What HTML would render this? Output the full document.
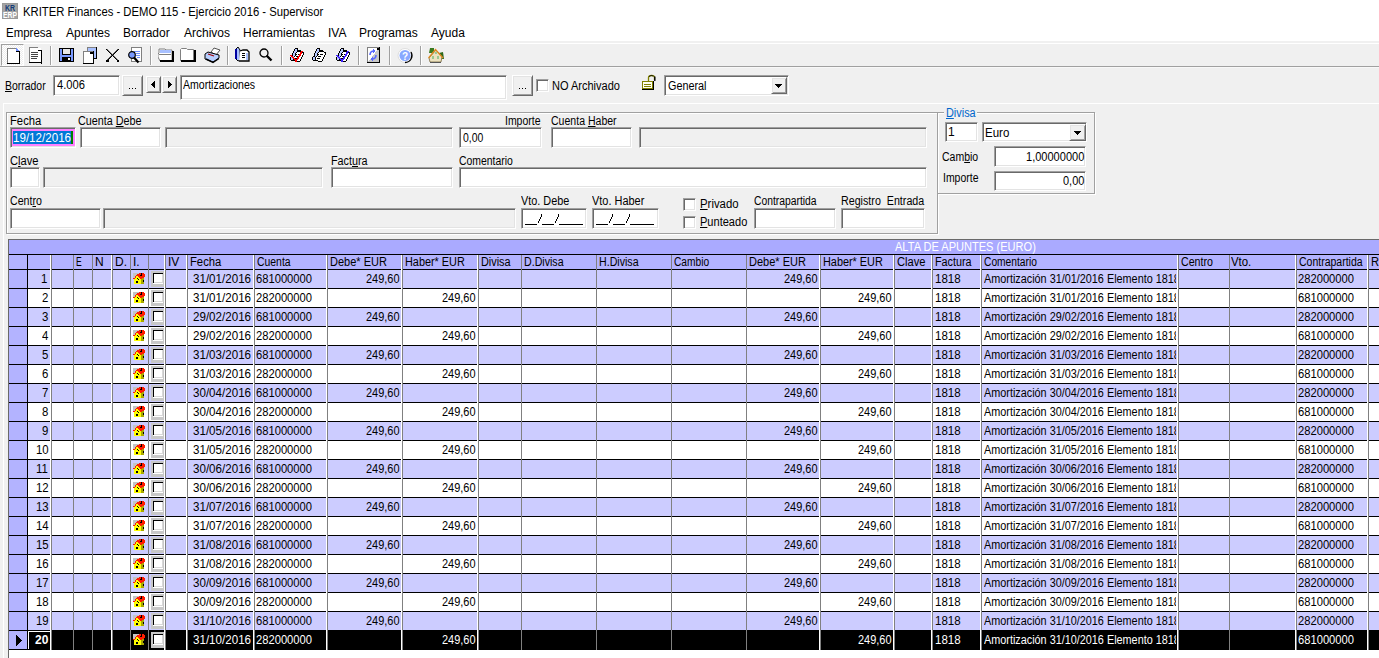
<!DOCTYPE html><html><head><meta charset="utf-8"><style>
html,body{margin:0;padding:0;}
body{width:1379px;height:658px;overflow:hidden;position:relative;background:#f0f0f0;font-family:"Liberation Sans",sans-serif;}
.a{position:absolute;box-sizing:border-box;}
.t{position:absolute;white-space:pre;line-height:1;transform-origin:0 0;}
.sunk{border-top:1px solid #a0a0a0;border-left:1px solid #a0a0a0;border-right:1px solid #fff;border-bottom:1px solid #fff;box-shadow:inset 1px 1px 0 #696969, inset -1px -1px 0 #e3e3e3;}
.rais{border-top:1px solid #fff;border-left:1px solid #fff;border-right:1px solid #696969;border-bottom:1px solid #696969;box-shadow:inset 1px 1px 0 #e3e3e3, inset -1px -1px 0 #a0a0a0;}
.u{text-decoration:underline;}
</style></head><body>
<div class="a" style="left:0px;top:0px;width:1379px;height:41px;background:#fff;"></div><svg class="a" style="left:2px;top:3px" width="16" height="16" viewBox="0 0 16 16" shape-rendering="crispEdges"><rect x="0" y="0" width="16" height="16" fill="#a4a4a4"/><rect x="0.5" y="0.5" width="15" height="15" fill="none" stroke="#9a9a9a"/><text x="3" y="8" font-family="Liberation Sans" font-weight="bold" font-size="9.5" fill="#123a78" textLength="10" lengthAdjust="spacingAndGlyphs">KR</text><text x="1" y="15" font-family="Liberation Sans" font-weight="bold" font-size="8.5" fill="#fff" textLength="14" lengthAdjust="spacingAndGlyphs">ERP</text></svg><div class="t" style="left:23.06px;top:6px;font-size:12px;color:#000;transform:scaleX(0.9403);">KRITER Finances - DEMO 115 - Ejercicio 2016 - Supervisor</div><div class="t" style="left:6.04px;top:27px;font-size:12px;color:#000;transform:scaleX(0.9574);">Empresa</div><div class="t" style="left:66.00px;top:27px;font-size:12px;color:#000;">Apuntes</div><div class="t" style="left:123.00px;top:27px;font-size:12px;color:#000;">Borrador</div><div class="t" style="left:184.00px;top:27px;font-size:12px;color:#000;">Archivos</div><div class="t" style="left:243.00px;top:27px;font-size:12px;color:#000;">Herramientas</div><div class="t" style="left:328.00px;top:27px;font-size:12px;color:#000;">IVA</div><div class="t" style="left:359.00px;top:27px;font-size:12px;color:#000;">Programas</div><div class="t" style="left:431.00px;top:27px;font-size:12px;color:#000;">Ayuda</div><div class="a" style="left:0px;top:41px;width:1379px;height:25px;background:#f0f0f0;"></div><div class="a" style="left:0px;top:43px;width:1379px;height:1px;background:#fff;"></div><div class="a" style="left:0px;top:66px;width:1379px;height:1px;background:#a0a0a0;"></div><div class="a" style="left:0px;top:67px;width:1379px;height:1px;background:#f8f8f8;"></div><div class="a" style="left:1px;top:44px;width:23px;height:22px;border-top:1px solid #a0a0a0;border-left:1px solid #a0a0a0;border-right:1px solid #fff;border-bottom:1px solid #fff;background:repeating-conic-gradient(#fff 0 25%, #ececec 0 50%) 0 0/2px 2px;"></div><div class="a" style="left:50px;top:46px;width:1px;height:19px;background:#a0a0a0;"></div><div class="a" style="left:51px;top:46px;width:1px;height:19px;background:#fff;"></div><div class="a" style="left:150px;top:46px;width:1px;height:19px;background:#a0a0a0;"></div><div class="a" style="left:151px;top:46px;width:1px;height:19px;background:#fff;"></div><div class="a" style="left:227px;top:46px;width:1px;height:19px;background:#a0a0a0;"></div><div class="a" style="left:228px;top:46px;width:1px;height:19px;background:#fff;"></div><div class="a" style="left:281px;top:46px;width:1px;height:19px;background:#a0a0a0;"></div><div class="a" style="left:282px;top:46px;width:1px;height:19px;background:#fff;"></div><div class="a" style="left:358px;top:46px;width:1px;height:19px;background:#a0a0a0;"></div><div class="a" style="left:359px;top:46px;width:1px;height:19px;background:#fff;"></div><div class="a" style="left:389px;top:46px;width:1px;height:19px;background:#a0a0a0;"></div><div class="a" style="left:390px;top:46px;width:1px;height:19px;background:#fff;"></div><div class="a" style="left:420px;top:46px;width:1px;height:19px;background:#a0a0a0;"></div><div class="a" style="left:421px;top:46px;width:1px;height:19px;background:#fff;"></div><svg class="a" style="left:7px;top:48px" width="14" height="17" viewBox="0 0 14 17" shape-rendering="crispEdges"><rect x="0" y="0" width="1" height="16" fill="#808080"/><rect x="0" y="0" width="9" height="1" fill="#808080"/><rect x="1" y="1" width="11" height="14" fill="#fff"/><path d="M9 0 L13 4 H9 Z" fill="#6f8fff"/><rect x="12" y="3" width="1" height="13" fill="#000"/><rect x="0" y="15" width="13" height="1" fill="#000"/><rect x="9" y="3" width="4" height="1" fill="#000"/></svg><svg class="a" style="left:29px;top:47px" width="14" height="17" viewBox="0 0 14 17" shape-rendering="crispEdges"><rect x="0" y="0" width="1" height="16" fill="#808080"/><rect x="0" y="0" width="9" height="1" fill="#808080"/><rect x="1" y="1" width="11" height="15" fill="#fff"/><rect x="12" y="3" width="1" height="14" fill="#000"/><rect x="0" y="15" width="13" height="1" fill="#000"/><rect x="9" y="3" width="4" height="1" fill="#000"/><rect x="2" y="5" width="7" height="1" fill="#444"/><rect x="2" y="7" width="7" height="1" fill="#444"/><rect x="2" y="9" width="7" height="1" fill="#444"/><rect x="2" y="11" width="6" height="1" fill="#444"/></svg><svg class="a" style="left:59px;top:48px" width="15" height="15" viewBox="0 0 15 15" shape-rendering="crispEdges"><rect x="0" y="0" width="15" height="14" fill="#000"/><rect x="1" y="1" width="13" height="12" fill="#7a9aff"/><rect x="3" y="1" width="9" height="6" fill="#000"/><rect x="4" y="1" width="7" height="5" fill="#e8e8e8"/><rect x="3" y="9" width="9" height="4" fill="#000"/><rect x="9" y="10" width="2" height="2" fill="#fff"/></svg><svg class="a" style="left:83px;top:47px" width="15" height="17" viewBox="0 0 15 17" shape-rendering="crispEdges"><rect x="4" y="0" width="10" height="12" fill="#000"/><rect x="4" y="0" width="9" height="11" fill="#808080"/><rect x="5" y="1" width="8" height="10" fill="#a8c0ff"/><rect x="0" y="4" width="11" height="13" fill="#000"/><rect x="0" y="4" width="10" height="12" fill="#808080"/><rect x="1" y="5" width="9" height="11" fill="#fff"/><rect x="7" y="5" width="3" height="2" fill="#000"/></svg><svg class="a" style="left:106px;top:49px" width="13" height="13" viewBox="0 0 13 13" shape-rendering="crispEdges"><rect x="0" y="0" width="1" height="1" fill="#000"/><rect x="1" y="0" width="1" height="1" fill="#777"/><rect x="12" y="0" width="1" height="1" fill="#000"/><rect x="11" y="0" width="1" height="1" fill="#555"/><rect x="1" y="1" width="1" height="1" fill="#000"/><rect x="2" y="1" width="1" height="1" fill="#777"/><rect x="11" y="1" width="1" height="1" fill="#000"/><rect x="10" y="1" width="1" height="1" fill="#555"/><rect x="2" y="2" width="1" height="1" fill="#000"/><rect x="3" y="2" width="1" height="1" fill="#777"/><rect x="10" y="2" width="1" height="1" fill="#000"/><rect x="9" y="2" width="1" height="1" fill="#555"/><rect x="3" y="3" width="1" height="1" fill="#000"/><rect x="4" y="3" width="1" height="1" fill="#777"/><rect x="9" y="3" width="1" height="1" fill="#000"/><rect x="8" y="3" width="1" height="1" fill="#555"/><rect x="4" y="4" width="1" height="1" fill="#000"/><rect x="5" y="4" width="1" height="1" fill="#777"/><rect x="8" y="4" width="1" height="1" fill="#000"/><rect x="7" y="4" width="1" height="1" fill="#555"/><rect x="5" y="5" width="1" height="1" fill="#000"/><rect x="6" y="5" width="1" height="1" fill="#777"/><rect x="7" y="5" width="1" height="1" fill="#000"/><rect x="6" y="5" width="1" height="1" fill="#555"/><rect x="6" y="6" width="1" height="1" fill="#000"/><rect x="7" y="6" width="1" height="1" fill="#777"/><rect x="6" y="6" width="1" height="1" fill="#000"/><rect x="5" y="6" width="1" height="1" fill="#555"/><rect x="7" y="7" width="1" height="1" fill="#000"/><rect x="8" y="7" width="1" height="1" fill="#777"/><rect x="5" y="7" width="1" height="1" fill="#000"/><rect x="4" y="7" width="1" height="1" fill="#555"/><rect x="8" y="8" width="1" height="1" fill="#000"/><rect x="9" y="8" width="1" height="1" fill="#777"/><rect x="4" y="8" width="1" height="1" fill="#000"/><rect x="3" y="8" width="1" height="1" fill="#555"/><rect x="9" y="9" width="1" height="1" fill="#000"/><rect x="10" y="9" width="1" height="1" fill="#777"/><rect x="3" y="9" width="1" height="1" fill="#000"/><rect x="2" y="9" width="1" height="1" fill="#555"/><rect x="10" y="10" width="1" height="1" fill="#000"/><rect x="11" y="10" width="1" height="1" fill="#777"/><rect x="2" y="10" width="1" height="1" fill="#000"/><rect x="1" y="10" width="1" height="1" fill="#555"/><rect x="11" y="11" width="1" height="1" fill="#000"/><rect x="12" y="11" width="1" height="1" fill="#777"/><rect x="1" y="11" width="1" height="1" fill="#000"/><rect x="0" y="11" width="1" height="1" fill="#555"/><rect x="12" y="12" width="1" height="1" fill="#000"/><rect x="12" y="12" width="1" height="1" fill="#777"/><rect x="0" y="12" width="1" height="1" fill="#000"/><rect x="0" y="12" width="1" height="1" fill="#555"/><rect x="0" y="11" width="3" height="2" fill="#000"/><rect x="11" y="11" width="2" height="2" fill="#000"/></svg><svg class="a" style="left:128px;top:47px" width="15" height="17" viewBox="0 0 15 17" shape-rendering="crispEdges"><rect x="3" y="0" width="11" height="15" fill="#808080"/><rect x="4" y="1" width="9" height="13" fill="#fff"/><rect x="6" y="4" width="6" height="1" fill="#6f8fff"/><rect x="8" y="6" width="4" height="1" fill="#6f8fff"/><rect x="8" y="8" width="4" height="1" fill="#6f8fff"/><rect x="9" y="10" width="3" height="1" fill="#6f8fff"/><circle cx="4" cy="8" r="3.3" fill="#7a9aff" stroke="#000" stroke-width="1.2" shape-rendering="auto"/><path d="M6 10.5 L10.5 15.5" stroke="#000" stroke-width="2.2" shape-rendering="auto"/></svg><svg class="a" style="left:158px;top:48px" width="16" height="14" viewBox="0 0 16 14" shape-rendering="crispEdges"><path d="M1 1 H7 L8 2 H14 V13 H2 L0 9 V6 L1 5 Z" fill="#fff" stroke="#808080" stroke-width="1" shape-rendering="auto"/><rect x="2" y="2" width="11" height="3" fill="#a8c0ff"/><rect x="0.5" y="5.5" width="12" height="1" fill="#808080"/><rect x="14" y="3" width="2" height="11" fill="#000"/><rect x="2" y="12" width="14" height="2" fill="#000"/></svg><svg class="a" style="left:180px;top:48px" width="16" height="14" viewBox="0 0 16 14" shape-rendering="crispEdges"><path d="M0.5 1.5 L1.5 0.5 H6.5 L7.5 1.5 H13.5 V12.5 H0.5 Z" fill="#fff" stroke="#808080" shape-rendering="auto"/><rect x="14" y="2" width="2" height="12" fill="#000"/><rect x="1" y="12" width="15" height="2" fill="#000"/></svg><svg class="a" style="left:204px;top:47px" width="17" height="17" viewBox="0 0 17 17" shape-rendering="crispEdges"><path d="M7 5 L10 1 L16 3 L12 8 Z" fill="#fff" stroke="#555" shape-rendering="auto"/><path d="M1 7 L4 5 L15 8 L15 11 L9 15 L1 12 Z" fill="#b8cfff" stroke="#000" shape-rendering="auto"/><path d="M4 7 L10 9" stroke="#a00000" stroke-width="1.2" shape-rendering="auto"/><path d="M2 12 L9 15.5 L15 11.5" stroke="#000" stroke-width="1.4" fill="none" shape-rendering="auto"/></svg><svg class="a" style="left:235px;top:47px" width="15" height="15" viewBox="0 0 15 15" shape-rendering="crispEdges"><path d="M1 2 L3 0 L5 3 V13 L3 14 L1 12 Z" fill="#a8c0ff" stroke="#000" shape-rendering="auto"/><rect x="0" y="2" width="1.5" height="10" fill="#0000a0"/><path d="M5 4 L8 3 H12 L14 5 V14 H4" fill="#fff" stroke="#000" stroke-width="1.3" shape-rendering="auto"/><rect x="11" y="6" width="2" height="7" fill="#a8c0ff"/><rect x="7" y="6" width="3" height="1" fill="#000"/><rect x="7" y="8" width="3" height="1" fill="#000"/><rect x="7" y="10" width="3" height="1" fill="#000"/></svg><svg class="a" style="left:259px;top:48px" width="14" height="14" viewBox="0 0 14 14" shape-rendering="crispEdges"><circle cx="5" cy="5" r="4" fill="#f0f0f0" stroke="#000" stroke-width="1.3" shape-rendering="auto"/><path d="M7.5 7.5 L12.5 12.5" stroke="#000" stroke-width="2.4" shape-rendering="auto"/></svg><svg class="a" style="left:290px;top:48px" width="16" height="14" viewBox="0 0 16 14" shape-rendering="crispEdges"><rect x="5" y="0" width="3" height="1" fill="#000"/><rect x="4" y="1" width="1" height="1" fill="#000"/><rect x="5" y="1" width="2" height="1" fill="#b8c8ff"/><rect x="7" y="1" width="1" height="1" fill="#000"/><rect x="4" y="2" width="1" height="1" fill="#000"/><rect x="5" y="2" width="2" height="1" fill="#b8c8ff"/><rect x="7" y="2" width="4" height="1" fill="#000"/><rect x="3" y="3" width="1" height="1" fill="#000"/><rect x="4" y="3" width="3" height="1" fill="#b8c8ff"/><rect x="7" y="3" width="4" height="1" fill="#000"/><rect x="11" y="3" width="2" height="1" fill="#ff0000"/><rect x="3" y="4" width="1" height="1" fill="#000"/><rect x="4" y="4" width="2" height="1" fill="#b8c8ff"/><rect x="6" y="4" width="1" height="1" fill="#000"/><rect x="7" y="4" width="3" height="1" fill="#fff"/><rect x="10" y="4" width="2" height="1" fill="#ff0000"/><rect x="12" y="4" width="2" height="1" fill="#000"/><rect x="2" y="5" width="1" height="1" fill="#000"/><rect x="3" y="5" width="2" height="1" fill="#b8c8ff"/><rect x="5" y="5" width="1" height="1" fill="#000"/><rect x="6" y="5" width="4" height="1" fill="#fff"/><rect x="10" y="5" width="2" height="1" fill="#ff0000"/><rect x="12" y="5" width="1" height="1" fill="#fff"/><rect x="13" y="5" width="1" height="1" fill="#000"/><rect x="2" y="6" width="1" height="1" fill="#000"/><rect x="3" y="6" width="2" height="1" fill="#b8c8ff"/><rect x="5" y="6" width="2" height="1" fill="#000"/><rect x="7" y="6" width="1" height="1" fill="#fff"/><rect x="8" y="6" width="1" height="1" fill="#000"/><rect x="9" y="6" width="2" height="1" fill="#ff0000"/><rect x="11" y="6" width="2" height="1" fill="#fff"/><rect x="13" y="6" width="1" height="1" fill="#000"/><rect x="0" y="7" width="2" height="1" fill="#ff0000"/><rect x="2" y="7" width="1" height="1" fill="#000"/><rect x="3" y="7" width="2" height="1" fill="#b8c8ff"/><rect x="5" y="7" width="1" height="1" fill="#000"/><rect x="6" y="7" width="3" height="1" fill="#fff"/><rect x="9" y="7" width="2" height="1" fill="#ff0000"/><rect x="11" y="7" width="1" height="1" fill="#fff"/><rect x="12" y="7" width="1" height="1" fill="#000"/><rect x="1" y="8" width="2" height="1" fill="#ff0000"/><rect x="3" y="8" width="1" height="1" fill="#b8c8ff"/><rect x="4" y="8" width="1" height="1" fill="#000"/><rect x="5" y="8" width="1" height="1" fill="#fff"/><rect x="6" y="8" width="2" height="1" fill="#000"/><rect x="8" y="8" width="2" height="1" fill="#ff0000"/><rect x="10" y="8" width="2" height="1" fill="#fff"/><rect x="12" y="8" width="1" height="1" fill="#000"/><rect x="0" y="9" width="1" height="1" fill="#000"/><rect x="1" y="9" width="1" height="1" fill="#b8c8ff"/><rect x="2" y="9" width="2" height="1" fill="#ff0000"/><rect x="4" y="9" width="3" height="1" fill="#fff"/><rect x="7" y="9" width="2" height="1" fill="#ff0000"/><rect x="9" y="9" width="2" height="1" fill="#fff"/><rect x="11" y="9" width="1" height="1" fill="#000"/><rect x="0" y="10" width="1" height="1" fill="#000"/><rect x="1" y="10" width="2" height="1" fill="#b8c8ff"/><rect x="3" y="10" width="2" height="1" fill="#ff0000"/><rect x="5" y="10" width="2" height="1" fill="#000"/><rect x="7" y="10" width="2" height="1" fill="#ff0000"/><rect x="9" y="10" width="2" height="1" fill="#fff"/><rect x="11" y="10" width="1" height="1" fill="#000"/><rect x="0" y="11" width="1" height="1" fill="#000"/><rect x="1" y="11" width="2" height="1" fill="#b8c8ff"/><rect x="3" y="11" width="1" height="1" fill="#000"/><rect x="4" y="11" width="4" height="1" fill="#ff0000"/><rect x="8" y="11" width="2" height="1" fill="#fff"/><rect x="10" y="11" width="1" height="1" fill="#000"/><rect x="1" y="12" width="4" height="1" fill="#000"/><rect x="5" y="12" width="2" height="1" fill="#ff0000"/><rect x="7" y="12" width="3" height="1" fill="#fff"/><rect x="10" y="12" width="1" height="1" fill="#000"/><rect x="5" y="13" width="2" height="1" fill="#ff0000"/><rect x="7" y="13" width="3" height="1" fill="#000"/></svg><svg class="a" style="left:312px;top:48px" width="16" height="14" viewBox="0 0 16 14" shape-rendering="crispEdges"><rect x="5" y="0" width="3" height="1" fill="#000"/><rect x="4" y="1" width="1" height="1" fill="#000"/><rect x="5" y="1" width="2" height="1" fill="#b8c8ff"/><rect x="7" y="1" width="1" height="1" fill="#000"/><rect x="4" y="2" width="1" height="1" fill="#000"/><rect x="5" y="2" width="2" height="1" fill="#b8c8ff"/><rect x="7" y="2" width="4" height="1" fill="#000"/><rect x="3" y="3" width="1" height="1" fill="#000"/><rect x="4" y="3" width="3" height="1" fill="#b8c8ff"/><rect x="7" y="3" width="5" height="1" fill="#000"/><rect x="3" y="4" width="1" height="1" fill="#000"/><rect x="4" y="4" width="2" height="1" fill="#b8c8ff"/><rect x="6" y="4" width="1" height="1" fill="#000"/><rect x="7" y="4" width="5" height="1" fill="#fff"/><rect x="12" y="4" width="2" height="1" fill="#000"/><rect x="2" y="5" width="1" height="1" fill="#000"/><rect x="3" y="5" width="2" height="1" fill="#b8c8ff"/><rect x="5" y="5" width="1" height="1" fill="#000"/><rect x="6" y="5" width="7" height="1" fill="#fff"/><rect x="13" y="5" width="1" height="1" fill="#000"/><rect x="2" y="6" width="1" height="1" fill="#000"/><rect x="3" y="6" width="2" height="1" fill="#b8c8ff"/><rect x="5" y="6" width="2" height="1" fill="#000"/><rect x="7" y="6" width="1" height="1" fill="#fff"/><rect x="8" y="6" width="3" height="1" fill="#000"/><rect x="11" y="6" width="2" height="1" fill="#fff"/><rect x="13" y="6" width="1" height="1" fill="#000"/><rect x="2" y="7" width="1" height="1" fill="#000"/><rect x="3" y="7" width="2" height="1" fill="#b8c8ff"/><rect x="5" y="7" width="1" height="1" fill="#000"/><rect x="6" y="7" width="6" height="1" fill="#fff"/><rect x="12" y="7" width="1" height="1" fill="#000"/><rect x="1" y="8" width="2" height="1" fill="#000"/><rect x="3" y="8" width="1" height="1" fill="#b8c8ff"/><rect x="4" y="8" width="1" height="1" fill="#000"/><rect x="5" y="8" width="1" height="1" fill="#fff"/><rect x="6" y="8" width="3" height="1" fill="#000"/><rect x="9" y="8" width="3" height="1" fill="#fff"/><rect x="12" y="8" width="1" height="1" fill="#000"/><rect x="0" y="9" width="1" height="1" fill="#000"/><rect x="1" y="9" width="2" height="1" fill="#b8c8ff"/><rect x="3" y="9" width="1" height="1" fill="#000"/><rect x="4" y="9" width="7" height="1" fill="#fff"/><rect x="11" y="9" width="1" height="1" fill="#000"/><rect x="0" y="10" width="1" height="1" fill="#000"/><rect x="1" y="10" width="2" height="1" fill="#b8c8ff"/><rect x="3" y="10" width="1" height="1" fill="#000"/><rect x="4" y="10" width="1" height="1" fill="#fff"/><rect x="5" y="10" width="3" height="1" fill="#000"/><rect x="8" y="10" width="3" height="1" fill="#fff"/><rect x="11" y="10" width="1" height="1" fill="#000"/><rect x="0" y="11" width="1" height="1" fill="#000"/><rect x="1" y="11" width="2" height="1" fill="#b8c8ff"/><rect x="3" y="11" width="1" height="1" fill="#000"/><rect x="4" y="11" width="6" height="1" fill="#fff"/><rect x="10" y="11" width="1" height="1" fill="#000"/><rect x="1" y="12" width="5" height="1" fill="#000"/><rect x="6" y="12" width="4" height="1" fill="#fff"/><rect x="10" y="12" width="1" height="1" fill="#000"/><rect x="6" y="13" width="4" height="1" fill="#000"/></svg><svg class="a" style="left:336px;top:48px" width="16" height="14" viewBox="0 0 16 14" shape-rendering="crispEdges"><rect x="5" y="0" width="3" height="1" fill="#000"/><rect x="4" y="1" width="1" height="1" fill="#000"/><rect x="5" y="1" width="2" height="1" fill="#b8c8ff"/><rect x="7" y="1" width="1" height="1" fill="#000"/><rect x="4" y="2" width="1" height="1" fill="#000"/><rect x="5" y="2" width="2" height="1" fill="#b8c8ff"/><rect x="7" y="2" width="4" height="1" fill="#000"/><rect x="3" y="3" width="1" height="1" fill="#000"/><rect x="4" y="3" width="3" height="1" fill="#b8c8ff"/><rect x="7" y="3" width="4" height="1" fill="#000"/><rect x="11" y="3" width="2" height="1" fill="#4020ff"/><rect x="3" y="4" width="1" height="1" fill="#000"/><rect x="4" y="4" width="2" height="1" fill="#b8c8ff"/><rect x="6" y="4" width="1" height="1" fill="#000"/><rect x="7" y="4" width="3" height="1" fill="#fff"/><rect x="10" y="4" width="2" height="1" fill="#4020ff"/><rect x="12" y="4" width="2" height="1" fill="#000"/><rect x="2" y="5" width="1" height="1" fill="#000"/><rect x="3" y="5" width="2" height="1" fill="#b8c8ff"/><rect x="5" y="5" width="1" height="1" fill="#000"/><rect x="6" y="5" width="4" height="1" fill="#fff"/><rect x="10" y="5" width="2" height="1" fill="#4020ff"/><rect x="12" y="5" width="1" height="1" fill="#fff"/><rect x="13" y="5" width="1" height="1" fill="#000"/><rect x="2" y="6" width="1" height="1" fill="#000"/><rect x="3" y="6" width="2" height="1" fill="#b8c8ff"/><rect x="5" y="6" width="2" height="1" fill="#000"/><rect x="7" y="6" width="1" height="1" fill="#fff"/><rect x="8" y="6" width="1" height="1" fill="#000"/><rect x="9" y="6" width="2" height="1" fill="#4020ff"/><rect x="11" y="6" width="2" height="1" fill="#fff"/><rect x="13" y="6" width="1" height="1" fill="#000"/><rect x="0" y="7" width="2" height="1" fill="#4020ff"/><rect x="2" y="7" width="1" height="1" fill="#000"/><rect x="3" y="7" width="2" height="1" fill="#b8c8ff"/><rect x="5" y="7" width="1" height="1" fill="#000"/><rect x="6" y="7" width="3" height="1" fill="#fff"/><rect x="9" y="7" width="2" height="1" fill="#4020ff"/><rect x="11" y="7" width="1" height="1" fill="#fff"/><rect x="12" y="7" width="1" height="1" fill="#000"/><rect x="1" y="8" width="2" height="1" fill="#4020ff"/><rect x="3" y="8" width="1" height="1" fill="#b8c8ff"/><rect x="4" y="8" width="1" height="1" fill="#000"/><rect x="5" y="8" width="1" height="1" fill="#fff"/><rect x="6" y="8" width="2" height="1" fill="#000"/><rect x="8" y="8" width="2" height="1" fill="#4020ff"/><rect x="10" y="8" width="2" height="1" fill="#fff"/><rect x="12" y="8" width="1" height="1" fill="#000"/><rect x="0" y="9" width="1" height="1" fill="#000"/><rect x="1" y="9" width="1" height="1" fill="#b8c8ff"/><rect x="2" y="9" width="2" height="1" fill="#4020ff"/><rect x="4" y="9" width="3" height="1" fill="#fff"/><rect x="7" y="9" width="2" height="1" fill="#4020ff"/><rect x="9" y="9" width="2" height="1" fill="#fff"/><rect x="11" y="9" width="1" height="1" fill="#000"/><rect x="0" y="10" width="1" height="1" fill="#000"/><rect x="1" y="10" width="2" height="1" fill="#b8c8ff"/><rect x="3" y="10" width="2" height="1" fill="#4020ff"/><rect x="5" y="10" width="2" height="1" fill="#000"/><rect x="7" y="10" width="2" height="1" fill="#4020ff"/><rect x="9" y="10" width="2" height="1" fill="#fff"/><rect x="11" y="10" width="1" height="1" fill="#000"/><rect x="0" y="11" width="1" height="1" fill="#000"/><rect x="1" y="11" width="2" height="1" fill="#b8c8ff"/><rect x="3" y="11" width="1" height="1" fill="#000"/><rect x="4" y="11" width="4" height="1" fill="#4020ff"/><rect x="8" y="11" width="2" height="1" fill="#fff"/><rect x="10" y="11" width="1" height="1" fill="#000"/><rect x="1" y="12" width="4" height="1" fill="#000"/><rect x="5" y="12" width="2" height="1" fill="#4020ff"/><rect x="7" y="12" width="3" height="1" fill="#fff"/><rect x="10" y="12" width="1" height="1" fill="#000"/><rect x="5" y="13" width="2" height="1" fill="#4020ff"/><rect x="7" y="13" width="3" height="1" fill="#000"/></svg><svg class="a" style="left:367px;top:47px" width="14" height="16" viewBox="0 0 14 16" shape-rendering="crispEdges"><rect x="0" y="0" width="13" height="16" fill="#000"/><rect x="0" y="0" width="12" height="15" fill="#808080"/><path d="M1 1 H10 L12 3 V15 H1 Z" fill="#fff"/><path d="M12 1 L1 15 H12 Z" fill="#c8c8c8"/><rect x="10" y="1" width="2" height="2" fill="#000"/><path d="M3 8 Q3 4 7 4 M9 8 Q9 12 5 12" stroke="#5a6aff" stroke-width="1.6" fill="none" shape-rendering="auto"/><path d="M6 2 L9 4 L6 6 Z M6 10 L3 12 L6 14 Z" fill="#5a6aff"/></svg><svg class="a" style="left:397px;top:48px" width="17" height="16" viewBox="0 0 17 16" shape-rendering="crispEdges"><circle cx="8" cy="7.5" r="7" fill="#fff" stroke="#ddd" shape-rendering="auto"/><path d="M14 4 A7 7 0 0 1 8 14.5" stroke="#000" stroke-width="1.3" fill="none" shape-rendering="auto"/><circle cx="8" cy="7.5" r="5.5" fill="#88a8ff" shape-rendering="auto"/><text x="8" y="11.5" font-family="Liberation Sans" font-weight="bold" font-size="10" fill="#fff" text-anchor="middle">?</text></svg><svg class="a" style="left:428px;top:47px" width="17" height="16" viewBox="0 0 17 16" shape-rendering="crispEdges"><path d="M2 1 L6 1 L6 6 L1 6 Z" fill="#3a7a20" shape-rendering="auto"/><path d="M11 6 L15 5 L16 12 L12 12 Z" fill="#2f6a1a" shape-rendering="auto"/><path d="M1 11 L8 3 L14 10 L13 15 H2 Z" fill="#ece2c0" stroke="#7a6a40" stroke-width="0.8" shape-rendering="auto"/><path d="M0.5 11 L7.5 2.5 L15 11" stroke="#e08a20" stroke-width="1.2" fill="none" shape-rendering="auto"/><rect x="6.5" y="5" width="2" height="2" fill="#9ac890"/><rect x="4" y="9" width="2" height="3" fill="#9ac890"/><rect x="9" y="9" width="2" height="3" fill="#9ac890"/><rect x="2" y="15" width="11" height="1" fill="#555"/></svg><div class="t" style="left:5.13px;top:80px;font-size:12px;color:#000;transform:scaleX(0.8696);"><span class="u">B</span>orrador</div><div class="a sunk" style="left:53px;top:75px;width:67px;height:21px;background:#fff;"></div><div class="t" style="left:57.00px;top:79px;font-size:12px;color:#000;transform:scaleX(0.9310);">4.006</div><div class="a rais" style="left:122px;top:75px;width:21px;height:21px;background:#f0f0f0;"></div><div class="a" style="left:129px;top:88px;width:1px;height:1px;background:#000;"></div><div class="a" style="left:132px;top:88px;width:1px;height:1px;background:#000;"></div><div class="a" style="left:135px;top:88px;width:1px;height:1px;background:#000;"></div><div class="a rais" style="left:146px;top:76px;width:15px;height:17px;background:#f0f0f0;"></div><svg class="a" style="left:146px;top:76px" width="15" height="17" viewBox="0 0 15 17" shape-rendering="crispEdges"><path d="M9 4 L5 8.5 L9 13 Z" fill="#000"/></svg><div class="a rais" style="left:162px;top:76px;width:15px;height:17px;background:#f0f0f0;"></div><svg class="a" style="left:162px;top:76px" width="15" height="17" viewBox="0 0 15 17" shape-rendering="crispEdges"><path d="M6 4 L10 8.5 L6 13 Z" fill="#000"/></svg><div class="a sunk" style="left:180px;top:75px;width:327px;height:25px;background:#fff;"></div><div class="t" style="left:183.00px;top:79px;font-size:12px;color:#000;transform:scaleX(0.8780);">Amortizaciones</div><div class="a rais" style="left:512px;top:75px;width:21px;height:21px;background:#f0f0f0;"></div><div class="a" style="left:519px;top:88px;width:1px;height:1px;background:#000;"></div><div class="a" style="left:522px;top:88px;width:1px;height:1px;background:#000;"></div><div class="a" style="left:525px;top:88px;width:1px;height:1px;background:#000;"></div><div class="a sunk" style="left:536px;top:79px;width:13px;height:13px;background:#fff;"></div><div class="t" style="left:552.08px;top:80px;font-size:12px;color:#000;transform:scaleX(0.9178);">NO Archivado</div><svg class="a" style="left:641px;top:74px" width="17" height="17" viewBox="0 0 17 17" shape-rendering="crispEdges"><path d="M7.5 7 V3.5 Q7.5 1.5 10.5 1.5 Q13.5 1.5 13.5 3.5 V6" stroke="#808000" stroke-width="1.3" fill="none" shape-rendering="auto"/><path d="M13.8 2.5 V7" stroke="#000" stroke-width="1.4" shape-rendering="auto"/><path d="M8 2.5 Q10 0.8 12.5 2" stroke="#000" stroke-width="0.8" fill="none" shape-rendering="auto"/><rect x="1" y="7" width="12" height="9" fill="#000"/><rect x="1" y="7" width="11" height="8" fill="#808000"/><rect x="2" y="8" width="9" height="6" fill="#fffff0"/><rect x="3" y="10" width="7" height="1" fill="#808000"/><rect x="3" y="12" width="7" height="1" fill="#808000"/></svg><div class="a sunk" style="left:664px;top:75px;width:125px;height:21px;background:#fff;"></div><div class="t" style="left:668.10px;top:80px;font-size:12px;color:#000;transform:scaleX(0.9024);">General</div><div class="a rais" style="left:771px;top:77px;width:16px;height:17px;background:#f0f0f0;"></div><svg class="a" style="left:771px;top:77px" width="16" height="17" viewBox="0 0 16 17" shape-rendering="crispEdges"><path d="M4 7 L11 7 L7.5 11 Z" fill="#000"/></svg><div class="a" style="left:3px;top:103px;width:1376px;height:1px;background:#fff;"></div><div class="a" style="left:3px;top:103px;width:1px;height:555px;background:#fff;"></div><div class="a" style="left:6px;top:112px;width:932px;height:122px;border:1px solid #a0a0a0;box-shadow:inset 1px 1px 0 #fff, 1px 1px 0 #fff;"></div><div class="a" style="left:937px;top:112px;width:158px;height:82px;border:1px solid #a0a0a0;box-shadow:inset 1px 1px 0 #fff, 1px 1px 0 #fff;"></div><div class="a" style="left:944px;top:106px;width:33px;height:12px;background:#f0f0f0;"></div><div class="t" style="left:946.09px;top:107px;font-size:12px;color:#0066cc;transform:scaleX(0.9062);"><span class="u">D</span>ivisa</div><div class="t" style="left:10.06px;top:115px;font-size:12px;color:#000;transform:scaleX(0.9375);">Fecha</div><div class="t" style="left:78.10px;top:115px;font-size:12px;color:#000;transform:scaleX(0.8986);">Cuenta <span class="u">D</span>ebe</div><div class="t" style="left:505.13px;top:115px;font-size:12px;color:#000;transform:scaleX(0.8718);">Importe</div><div class="t" style="left:551.12px;top:115px;font-size:12px;color:#000;transform:scaleX(0.8784);">Cuenta <span class="u">H</span>aber</div><div class="a sunk" style="left:10px;top:127px;width:66px;height:21px;background:#fff;"></div><div class="a" style="left:12px;top:129px;width:63px;height:17px;background:#ff80ff;"></div><div class="a" style="left:13px;top:131px;width:58px;height:13px;background:#0078d7;"></div><div class="a" style="left:71px;top:131px;width:2px;height:13px;background:#008000;"></div><div class="t" style="left:13.03px;top:132px;font-size:12px;color:#fff;transform:scaleX(0.9661);">19/12/2016</div><div class="a sunk" style="left:80px;top:127px;width:81px;height:21px;background:#fff;"></div><div class="a sunk" style="left:165px;top:127px;width:288px;height:21px;background:#f0f0f0;"></div><div class="a sunk" style="left:459px;top:127px;width:83px;height:21px;background:#fff;"></div><div class="t" style="left:463.00px;top:132px;font-size:12px;color:#000;transform:scaleX(0.8696);">0,00</div><div class="a sunk" style="left:551px;top:127px;width:81px;height:21px;background:#fff;"></div><div class="a sunk" style="left:639px;top:127px;width:288px;height:21px;background:#f0f0f0;"></div><div class="t" style="left:10.07px;top:155px;font-size:12px;color:#000;transform:scaleX(0.9310);">C<span class="u">l</span>ave</div><div class="t" style="left:331.10px;top:155px;font-size:12px;color:#000;transform:scaleX(0.9000);">Fact<span class="u">u</span>ra</div><div class="t" style="left:459.13px;top:155px;font-size:12px;color:#000;transform:scaleX(0.8689);">Comentario</div><div class="a sunk" style="left:10px;top:167px;width:30px;height:21px;background:#fff;"></div><div class="a sunk" style="left:43px;top:167px;width:280px;height:21px;background:#f0f0f0;"></div><div class="a sunk" style="left:331px;top:167px;width:122px;height:21px;background:#fff;"></div><div class="a sunk" style="left:459px;top:167px;width:468px;height:21px;background:#fff;"></div><div class="t" style="left:10.11px;top:195px;font-size:12px;color:#000;transform:scaleX(0.8857);">Cent<span class="u">r</span>o</div><div class="t" style="left:521.00px;top:195px;font-size:12px;color:#000;transform:scaleX(0.9057);">Vto. Debe</div><div class="t" style="left:592.00px;top:195px;font-size:12px;color:#000;transform:scaleX(0.9123);">Vto. Haber</div><div class="a sunk" style="left:10px;top:208px;width:91px;height:21px;background:#fff;"></div><div class="a sunk" style="left:103px;top:208px;width:413px;height:21px;background:#f0f0f0;"></div><div class="a sunk" style="left:521px;top:208px;width:66px;height:21px;background:#fff;"></div><div class="a" style="left:525px;top:224px;width:12px;height:1px;background:#000;"></div><div class="a" style="left:542px;top:224px;width:12px;height:1px;background:#000;"></div><div class="a" style="left:559px;top:224px;width:24px;height:1px;background:#000;"></div><div class="a" style="left:541px;top:214px;width:1px;height:3px;background:#000;"></div><div class="a" style="left:540px;top:217px;width:1px;height:2px;background:#000;"></div><div class="a" style="left:539px;top:219px;width:1px;height:2px;background:#000;"></div><div class="a" style="left:538px;top:221px;width:1px;height:2px;background:#000;"></div><div class="a" style="left:558px;top:214px;width:1px;height:3px;background:#000;"></div><div class="a" style="left:557px;top:217px;width:1px;height:2px;background:#000;"></div><div class="a" style="left:556px;top:219px;width:1px;height:2px;background:#000;"></div><div class="a" style="left:555px;top:221px;width:1px;height:2px;background:#000;"></div><div class="a sunk" style="left:592px;top:208px;width:67px;height:21px;background:#fff;"></div><div class="a" style="left:596px;top:224px;width:12px;height:1px;background:#000;"></div><div class="a" style="left:613px;top:224px;width:12px;height:1px;background:#000;"></div><div class="a" style="left:630px;top:224px;width:24px;height:1px;background:#000;"></div><div class="a" style="left:612px;top:214px;width:1px;height:3px;background:#000;"></div><div class="a" style="left:611px;top:217px;width:1px;height:2px;background:#000;"></div><div class="a" style="left:610px;top:219px;width:1px;height:2px;background:#000;"></div><div class="a" style="left:609px;top:221px;width:1px;height:2px;background:#000;"></div><div class="a" style="left:629px;top:214px;width:1px;height:3px;background:#000;"></div><div class="a" style="left:628px;top:217px;width:1px;height:2px;background:#000;"></div><div class="a" style="left:627px;top:219px;width:1px;height:2px;background:#000;"></div><div class="a" style="left:626px;top:221px;width:1px;height:2px;background:#000;"></div><div class="a sunk" style="left:683px;top:198px;width:13px;height:13px;background:#fff;"></div><div class="t" style="left:700.05px;top:198px;font-size:12px;color:#000;transform:scaleX(0.9487);"><span class="u">P</span>rivado</div><div class="a sunk" style="left:683px;top:216px;width:13px;height:13px;background:#fff;"></div><div class="t" style="left:700.08px;top:216px;font-size:12px;color:#000;transform:scaleX(0.9200);"><span class="u">P</span>unteado</div><div class="t" style="left:754.14px;top:195px;font-size:12px;color:#000;transform:scaleX(0.8611);">Contrapartida</div><div class="t" style="left:841.11px;top:195px;font-size:12px;color:#000;transform:scaleX(0.8913);">Registro  Entrada</div><div class="a sunk" style="left:754px;top:208px;width:82px;height:21px;background:#fff;"></div><div class="a sunk" style="left:841px;top:208px;width:84px;height:21px;background:#fff;"></div><div class="a sunk" style="left:945px;top:122px;width:33px;height:20px;background:#fff;"></div><div class="t" style="left:948.00px;top:126px;font-size:12px;color:#000;">1</div><div class="a sunk" style="left:982px;top:122px;width:105px;height:20px;background:#fff;"></div><div class="t" style="left:985.04px;top:127px;font-size:12px;color:#000;transform:scaleX(0.9583);">Euro</div><div class="a rais" style="left:1069px;top:124px;width:17px;height:17px;background:#f0f0f0;"></div><svg class="a" style="left:1069px;top:124px" width="17" height="17" viewBox="0 0 17 17" shape-rendering="crispEdges"><path d="M5 7 L12 7 L8.5 11 Z" fill="#000"/></svg><div class="t" style="left:942.12px;top:151px;font-size:12px;color:#000;transform:scaleX(0.8750);">Cam<span class="u">b</span>io</div><div class="a sunk" style="left:994px;top:146px;width:92px;height:21px;background:#fff;"></div><div class="t" style="left:1026.08px;top:151px;font-size:12px;color:#000;transform:scaleX(0.9194);">1,00000000</div><div class="t" style="left:943.13px;top:172px;font-size:12px;color:#000;transform:scaleX(0.8718);">Importe</div><div class="a sunk" style="left:994px;top:171px;width:92px;height:20px;background:#fff;"></div><div class="t" style="left:1063.00px;top:175px;font-size:12px;color:#000;transform:scaleX(0.9130);">0,00</div><div class="a" style="left:9px;top:240px;width:1370px;height:418px;background:#fff;"></div><div class="a" style="left:8px;top:239px;width:1371px;height:1px;background:#696969;"></div><div class="a" style="left:8px;top:239px;width:1px;height:419px;background:#696969;"></div><div class="a" style="left:9px;top:240px;width:1370px;height:14px;background:#aaaaff;"></div><div class="t" style="left:895.00px;top:241px;font-size:12px;color:#fff;transform:scaleX(0.9211);">ALTA DE APUNTES (EURO)</div><div class="a" style="left:9px;top:254px;width:1370px;height:1px;background:#000;"></div><div class="a" style="left:9px;top:255px;width:1370px;height:14px;background:#b3b3ff;"></div><div class="a" style="left:9px;top:269px;width:1370px;height:1px;background:#000;"></div><div class="a" style="left:9px;top:270px;width:18px;height:18px;background:#b3b3ff;"></div><div class="a" style="left:28px;top:270px;width:1351px;height:18px;background:#ccccff;"></div><div class="a" style="left:9px;top:288px;width:1370px;height:1px;background:#000;"></div><div class="t" style="left:41.30px;top:273px;font-size:12px;color:#000;transform:scaleX(0.9500);">1</div><svg class="a" style="left:133px;top:273px" width="12" height="11" viewBox="0 0 12 11" shape-rendering="crispEdges"><rect x="0" y="0" width="6" height="1" fill="#c4c4c4"/><rect x="6" y="0" width="2" height="1" fill="#ff1c00"/><rect x="8" y="0" width="1" height="1" fill="#000"/><rect x="9" y="0" width="2" height="1" fill="#ff1c00"/><rect x="0" y="1" width="4" height="1" fill="#c4c4c4"/><rect x="4" y="1" width="4" height="1" fill="#ff1c00"/><rect x="8" y="1" width="1" height="1" fill="#000"/><rect x="9" y="1" width="3" height="1" fill="#ff1c00"/><rect x="0" y="2" width="3" height="1" fill="#c4c4c4"/><rect x="3" y="2" width="4" height="1" fill="#ff1c00"/><rect x="7" y="2" width="2" height="1" fill="#000"/><rect x="9" y="2" width="3" height="1" fill="#ff1c00"/><rect x="0" y="3" width="2" height="1" fill="#c4c4c4"/><rect x="2" y="3" width="1" height="1" fill="#ff1c00"/><rect x="3" y="3" width="2" height="1" fill="#ffff00"/><rect x="5" y="3" width="7" height="1" fill="#ff1c00"/><rect x="0" y="4" width="2" height="1" fill="#c4c4c4"/><rect x="2" y="4" width="1" height="1" fill="#ff1c00"/><rect x="3" y="4" width="3" height="1" fill="#ffff00"/><rect x="6" y="4" width="5" height="1" fill="#ff1c00"/><rect x="0" y="5" width="2" height="1" fill="#ff1c00"/><rect x="2" y="5" width="2" height="1" fill="#ffff00"/><rect x="4" y="5" width="1" height="1" fill="#000"/><rect x="5" y="5" width="2" height="1" fill="#ffff00"/><rect x="7" y="5" width="2" height="1" fill="#ff1c00"/><rect x="9" y="5" width="2" height="1" fill="#a8a800"/><rect x="1" y="6" width="4" height="1" fill="#ffff00"/><rect x="5" y="6" width="1" height="1" fill="#000"/><rect x="6" y="6" width="2" height="1" fill="#ffff00"/><rect x="8" y="6" width="3" height="1" fill="#a8a800"/><rect x="1" y="7" width="7" height="1" fill="#ffff00"/><rect x="8" y="7" width="2" height="1" fill="#a8a800"/><rect x="10" y="7" width="1" height="1" fill="#000"/><rect x="1" y="8" width="2" height="1" fill="#ffff00"/><rect x="3" y="8" width="2" height="1" fill="#000"/><rect x="5" y="8" width="3" height="1" fill="#ffff00"/><rect x="8" y="8" width="2" height="1" fill="#a8a800"/><rect x="10" y="8" width="1" height="1" fill="#000"/><rect x="1" y="9" width="2" height="1" fill="#ffff00"/><rect x="3" y="9" width="2" height="1" fill="#000"/><rect x="5" y="9" width="3" height="1" fill="#ffff00"/><rect x="8" y="9" width="3" height="1" fill="#a8a800"/><rect x="1" y="10" width="7" height="1" fill="#ffff00"/><rect x="8" y="10" width="3" height="1" fill="#a8a800"/></svg><div class="a" style="left:151px;top:271px;width:13px;height:16px;background:#c8c8c8;"></div><div class="a" style="left:153px;top:273px;width:10px;height:10px;background:#d8d8d8;"></div><div class="a" style="left:154px;top:274px;width:8px;height:8px;background:#fff;"></div><div class="a" style="left:153px;top:273px;width:10px;height:1px;background:#000;"></div><div class="a" style="left:153px;top:273px;width:1px;height:10px;background:#000;"></div><div class="a" style="left:153px;top:283px;width:10px;height:1px;background:#fff;"></div><div class="t" style="left:193.03px;top:273px;font-size:12px;color:#000;transform:scaleX(0.9661);">31/01/2016</div><div class="t" style="left:256.07px;top:273px;font-size:12px;color:#000;transform:scaleX(0.9322);">681000000</div><div class="t" style="left:366.09px;top:273px;font-size:12px;color:#000;transform:scaleX(0.9143);">249,60</div><div class="t" style="left:784.09px;top:273px;font-size:12px;color:#000;transform:scaleX(0.9143);">249,60</div><div class="t" style="left:935.04px;top:273px;font-size:12px;color:#000;transform:scaleX(0.9600);">1818</div><div class="a" style="left:981px;top:270px;width:195px;height:18px;overflow:hidden"><div class="t" style="left:3.00px;top:3px;font-size:12px;color:#000;transform:scaleX(0.9032);">Amortización 31/01/2016 Elemento 1818</div></div><div class="t" style="left:1298.07px;top:273px;font-size:12px;color:#000;transform:scaleX(0.9322);">282000000</div><div class="a" style="left:9px;top:289px;width:18px;height:18px;background:#b3b3ff;"></div><div class="a" style="left:28px;top:289px;width:1351px;height:18px;background:#ffffff;"></div><div class="a" style="left:9px;top:307px;width:1370px;height:1px;background:#000;"></div><div class="t" style="left:42.30px;top:292px;font-size:12px;color:#000;transform:scaleX(0.9500);">2</div><svg class="a" style="left:133px;top:292px" width="12" height="11" viewBox="0 0 12 11" shape-rendering="crispEdges"><rect x="0" y="0" width="6" height="1" fill="#c4c4c4"/><rect x="6" y="0" width="2" height="1" fill="#ff1c00"/><rect x="8" y="0" width="1" height="1" fill="#000"/><rect x="9" y="0" width="2" height="1" fill="#ff1c00"/><rect x="0" y="1" width="4" height="1" fill="#c4c4c4"/><rect x="4" y="1" width="4" height="1" fill="#ff1c00"/><rect x="8" y="1" width="1" height="1" fill="#000"/><rect x="9" y="1" width="3" height="1" fill="#ff1c00"/><rect x="0" y="2" width="3" height="1" fill="#c4c4c4"/><rect x="3" y="2" width="4" height="1" fill="#ff1c00"/><rect x="7" y="2" width="2" height="1" fill="#000"/><rect x="9" y="2" width="3" height="1" fill="#ff1c00"/><rect x="0" y="3" width="2" height="1" fill="#c4c4c4"/><rect x="2" y="3" width="1" height="1" fill="#ff1c00"/><rect x="3" y="3" width="2" height="1" fill="#ffff00"/><rect x="5" y="3" width="7" height="1" fill="#ff1c00"/><rect x="0" y="4" width="2" height="1" fill="#c4c4c4"/><rect x="2" y="4" width="1" height="1" fill="#ff1c00"/><rect x="3" y="4" width="3" height="1" fill="#ffff00"/><rect x="6" y="4" width="5" height="1" fill="#ff1c00"/><rect x="0" y="5" width="2" height="1" fill="#ff1c00"/><rect x="2" y="5" width="2" height="1" fill="#ffff00"/><rect x="4" y="5" width="1" height="1" fill="#000"/><rect x="5" y="5" width="2" height="1" fill="#ffff00"/><rect x="7" y="5" width="2" height="1" fill="#ff1c00"/><rect x="9" y="5" width="2" height="1" fill="#a8a800"/><rect x="1" y="6" width="4" height="1" fill="#ffff00"/><rect x="5" y="6" width="1" height="1" fill="#000"/><rect x="6" y="6" width="2" height="1" fill="#ffff00"/><rect x="8" y="6" width="3" height="1" fill="#a8a800"/><rect x="1" y="7" width="7" height="1" fill="#ffff00"/><rect x="8" y="7" width="2" height="1" fill="#a8a800"/><rect x="10" y="7" width="1" height="1" fill="#000"/><rect x="1" y="8" width="2" height="1" fill="#ffff00"/><rect x="3" y="8" width="2" height="1" fill="#000"/><rect x="5" y="8" width="3" height="1" fill="#ffff00"/><rect x="8" y="8" width="2" height="1" fill="#a8a800"/><rect x="10" y="8" width="1" height="1" fill="#000"/><rect x="1" y="9" width="2" height="1" fill="#ffff00"/><rect x="3" y="9" width="2" height="1" fill="#000"/><rect x="5" y="9" width="3" height="1" fill="#ffff00"/><rect x="8" y="9" width="3" height="1" fill="#a8a800"/><rect x="1" y="10" width="7" height="1" fill="#ffff00"/><rect x="8" y="10" width="3" height="1" fill="#a8a800"/></svg><div class="a" style="left:151px;top:290px;width:13px;height:16px;background:#c8c8c8;"></div><div class="a" style="left:153px;top:292px;width:10px;height:10px;background:#d8d8d8;"></div><div class="a" style="left:154px;top:293px;width:8px;height:8px;background:#fff;"></div><div class="a" style="left:153px;top:292px;width:10px;height:1px;background:#000;"></div><div class="a" style="left:153px;top:292px;width:1px;height:10px;background:#000;"></div><div class="a" style="left:153px;top:302px;width:10px;height:1px;background:#fff;"></div><div class="t" style="left:193.03px;top:292px;font-size:12px;color:#000;transform:scaleX(0.9661);">31/01/2016</div><div class="t" style="left:256.07px;top:292px;font-size:12px;color:#000;transform:scaleX(0.9322);">282000000</div><div class="t" style="left:442.09px;top:292px;font-size:12px;color:#000;transform:scaleX(0.9143);">249,60</div><div class="t" style="left:858.09px;top:292px;font-size:12px;color:#000;transform:scaleX(0.9143);">249,60</div><div class="t" style="left:935.04px;top:292px;font-size:12px;color:#000;transform:scaleX(0.9600);">1818</div><div class="a" style="left:981px;top:289px;width:195px;height:18px;overflow:hidden"><div class="t" style="left:3.00px;top:3px;font-size:12px;color:#000;transform:scaleX(0.9032);">Amortización 31/01/2016 Elemento 1818</div></div><div class="t" style="left:1298.07px;top:292px;font-size:12px;color:#000;transform:scaleX(0.9322);">681000000</div><div class="a" style="left:9px;top:308px;width:18px;height:18px;background:#b3b3ff;"></div><div class="a" style="left:28px;top:308px;width:1351px;height:18px;background:#ccccff;"></div><div class="a" style="left:9px;top:326px;width:1370px;height:1px;background:#000;"></div><div class="t" style="left:42.30px;top:311px;font-size:12px;color:#000;transform:scaleX(0.9500);">3</div><svg class="a" style="left:133px;top:311px" width="12" height="11" viewBox="0 0 12 11" shape-rendering="crispEdges"><rect x="0" y="0" width="6" height="1" fill="#c4c4c4"/><rect x="6" y="0" width="2" height="1" fill="#ff1c00"/><rect x="8" y="0" width="1" height="1" fill="#000"/><rect x="9" y="0" width="2" height="1" fill="#ff1c00"/><rect x="0" y="1" width="4" height="1" fill="#c4c4c4"/><rect x="4" y="1" width="4" height="1" fill="#ff1c00"/><rect x="8" y="1" width="1" height="1" fill="#000"/><rect x="9" y="1" width="3" height="1" fill="#ff1c00"/><rect x="0" y="2" width="3" height="1" fill="#c4c4c4"/><rect x="3" y="2" width="4" height="1" fill="#ff1c00"/><rect x="7" y="2" width="2" height="1" fill="#000"/><rect x="9" y="2" width="3" height="1" fill="#ff1c00"/><rect x="0" y="3" width="2" height="1" fill="#c4c4c4"/><rect x="2" y="3" width="1" height="1" fill="#ff1c00"/><rect x="3" y="3" width="2" height="1" fill="#ffff00"/><rect x="5" y="3" width="7" height="1" fill="#ff1c00"/><rect x="0" y="4" width="2" height="1" fill="#c4c4c4"/><rect x="2" y="4" width="1" height="1" fill="#ff1c00"/><rect x="3" y="4" width="3" height="1" fill="#ffff00"/><rect x="6" y="4" width="5" height="1" fill="#ff1c00"/><rect x="0" y="5" width="2" height="1" fill="#ff1c00"/><rect x="2" y="5" width="2" height="1" fill="#ffff00"/><rect x="4" y="5" width="1" height="1" fill="#000"/><rect x="5" y="5" width="2" height="1" fill="#ffff00"/><rect x="7" y="5" width="2" height="1" fill="#ff1c00"/><rect x="9" y="5" width="2" height="1" fill="#a8a800"/><rect x="1" y="6" width="4" height="1" fill="#ffff00"/><rect x="5" y="6" width="1" height="1" fill="#000"/><rect x="6" y="6" width="2" height="1" fill="#ffff00"/><rect x="8" y="6" width="3" height="1" fill="#a8a800"/><rect x="1" y="7" width="7" height="1" fill="#ffff00"/><rect x="8" y="7" width="2" height="1" fill="#a8a800"/><rect x="10" y="7" width="1" height="1" fill="#000"/><rect x="1" y="8" width="2" height="1" fill="#ffff00"/><rect x="3" y="8" width="2" height="1" fill="#000"/><rect x="5" y="8" width="3" height="1" fill="#ffff00"/><rect x="8" y="8" width="2" height="1" fill="#a8a800"/><rect x="10" y="8" width="1" height="1" fill="#000"/><rect x="1" y="9" width="2" height="1" fill="#ffff00"/><rect x="3" y="9" width="2" height="1" fill="#000"/><rect x="5" y="9" width="3" height="1" fill="#ffff00"/><rect x="8" y="9" width="3" height="1" fill="#a8a800"/><rect x="1" y="10" width="7" height="1" fill="#ffff00"/><rect x="8" y="10" width="3" height="1" fill="#a8a800"/></svg><div class="a" style="left:151px;top:309px;width:13px;height:16px;background:#c8c8c8;"></div><div class="a" style="left:153px;top:311px;width:10px;height:10px;background:#d8d8d8;"></div><div class="a" style="left:154px;top:312px;width:8px;height:8px;background:#fff;"></div><div class="a" style="left:153px;top:311px;width:10px;height:1px;background:#000;"></div><div class="a" style="left:153px;top:311px;width:1px;height:10px;background:#000;"></div><div class="a" style="left:153px;top:321px;width:10px;height:1px;background:#fff;"></div><div class="t" style="left:193.03px;top:311px;font-size:12px;color:#000;transform:scaleX(0.9661);">29/02/2016</div><div class="t" style="left:256.07px;top:311px;font-size:12px;color:#000;transform:scaleX(0.9322);">681000000</div><div class="t" style="left:366.09px;top:311px;font-size:12px;color:#000;transform:scaleX(0.9143);">249,60</div><div class="t" style="left:784.09px;top:311px;font-size:12px;color:#000;transform:scaleX(0.9143);">249,60</div><div class="t" style="left:935.04px;top:311px;font-size:12px;color:#000;transform:scaleX(0.9600);">1818</div><div class="a" style="left:981px;top:308px;width:195px;height:18px;overflow:hidden"><div class="t" style="left:3.00px;top:3px;font-size:12px;color:#000;transform:scaleX(0.9032);">Amortización 29/02/2016 Elemento 1818</div></div><div class="t" style="left:1298.07px;top:311px;font-size:12px;color:#000;transform:scaleX(0.9322);">282000000</div><div class="a" style="left:9px;top:327px;width:18px;height:18px;background:#b3b3ff;"></div><div class="a" style="left:28px;top:327px;width:1351px;height:18px;background:#ffffff;"></div><div class="a" style="left:9px;top:345px;width:1370px;height:1px;background:#000;"></div><div class="t" style="left:42.30px;top:330px;font-size:12px;color:#000;transform:scaleX(0.9500);">4</div><svg class="a" style="left:133px;top:330px" width="12" height="11" viewBox="0 0 12 11" shape-rendering="crispEdges"><rect x="0" y="0" width="6" height="1" fill="#c4c4c4"/><rect x="6" y="0" width="2" height="1" fill="#ff1c00"/><rect x="8" y="0" width="1" height="1" fill="#000"/><rect x="9" y="0" width="2" height="1" fill="#ff1c00"/><rect x="0" y="1" width="4" height="1" fill="#c4c4c4"/><rect x="4" y="1" width="4" height="1" fill="#ff1c00"/><rect x="8" y="1" width="1" height="1" fill="#000"/><rect x="9" y="1" width="3" height="1" fill="#ff1c00"/><rect x="0" y="2" width="3" height="1" fill="#c4c4c4"/><rect x="3" y="2" width="4" height="1" fill="#ff1c00"/><rect x="7" y="2" width="2" height="1" fill="#000"/><rect x="9" y="2" width="3" height="1" fill="#ff1c00"/><rect x="0" y="3" width="2" height="1" fill="#c4c4c4"/><rect x="2" y="3" width="1" height="1" fill="#ff1c00"/><rect x="3" y="3" width="2" height="1" fill="#ffff00"/><rect x="5" y="3" width="7" height="1" fill="#ff1c00"/><rect x="0" y="4" width="2" height="1" fill="#c4c4c4"/><rect x="2" y="4" width="1" height="1" fill="#ff1c00"/><rect x="3" y="4" width="3" height="1" fill="#ffff00"/><rect x="6" y="4" width="5" height="1" fill="#ff1c00"/><rect x="0" y="5" width="2" height="1" fill="#ff1c00"/><rect x="2" y="5" width="2" height="1" fill="#ffff00"/><rect x="4" y="5" width="1" height="1" fill="#000"/><rect x="5" y="5" width="2" height="1" fill="#ffff00"/><rect x="7" y="5" width="2" height="1" fill="#ff1c00"/><rect x="9" y="5" width="2" height="1" fill="#a8a800"/><rect x="1" y="6" width="4" height="1" fill="#ffff00"/><rect x="5" y="6" width="1" height="1" fill="#000"/><rect x="6" y="6" width="2" height="1" fill="#ffff00"/><rect x="8" y="6" width="3" height="1" fill="#a8a800"/><rect x="1" y="7" width="7" height="1" fill="#ffff00"/><rect x="8" y="7" width="2" height="1" fill="#a8a800"/><rect x="10" y="7" width="1" height="1" fill="#000"/><rect x="1" y="8" width="2" height="1" fill="#ffff00"/><rect x="3" y="8" width="2" height="1" fill="#000"/><rect x="5" y="8" width="3" height="1" fill="#ffff00"/><rect x="8" y="8" width="2" height="1" fill="#a8a800"/><rect x="10" y="8" width="1" height="1" fill="#000"/><rect x="1" y="9" width="2" height="1" fill="#ffff00"/><rect x="3" y="9" width="2" height="1" fill="#000"/><rect x="5" y="9" width="3" height="1" fill="#ffff00"/><rect x="8" y="9" width="3" height="1" fill="#a8a800"/><rect x="1" y="10" width="7" height="1" fill="#ffff00"/><rect x="8" y="10" width="3" height="1" fill="#a8a800"/></svg><div class="a" style="left:151px;top:328px;width:13px;height:16px;background:#c8c8c8;"></div><div class="a" style="left:153px;top:330px;width:10px;height:10px;background:#d8d8d8;"></div><div class="a" style="left:154px;top:331px;width:8px;height:8px;background:#fff;"></div><div class="a" style="left:153px;top:330px;width:10px;height:1px;background:#000;"></div><div class="a" style="left:153px;top:330px;width:1px;height:10px;background:#000;"></div><div class="a" style="left:153px;top:340px;width:10px;height:1px;background:#fff;"></div><div class="t" style="left:193.03px;top:330px;font-size:12px;color:#000;transform:scaleX(0.9661);">29/02/2016</div><div class="t" style="left:256.07px;top:330px;font-size:12px;color:#000;transform:scaleX(0.9322);">282000000</div><div class="t" style="left:442.09px;top:330px;font-size:12px;color:#000;transform:scaleX(0.9143);">249,60</div><div class="t" style="left:858.09px;top:330px;font-size:12px;color:#000;transform:scaleX(0.9143);">249,60</div><div class="t" style="left:935.04px;top:330px;font-size:12px;color:#000;transform:scaleX(0.9600);">1818</div><div class="a" style="left:981px;top:327px;width:195px;height:18px;overflow:hidden"><div class="t" style="left:3.00px;top:3px;font-size:12px;color:#000;transform:scaleX(0.9032);">Amortización 29/02/2016 Elemento 1818</div></div><div class="t" style="left:1298.07px;top:330px;font-size:12px;color:#000;transform:scaleX(0.9322);">681000000</div><div class="a" style="left:9px;top:346px;width:18px;height:18px;background:#b3b3ff;"></div><div class="a" style="left:28px;top:346px;width:1351px;height:18px;background:#ccccff;"></div><div class="a" style="left:9px;top:364px;width:1370px;height:1px;background:#000;"></div><div class="t" style="left:42.30px;top:349px;font-size:12px;color:#000;transform:scaleX(0.9500);">5</div><svg class="a" style="left:133px;top:349px" width="12" height="11" viewBox="0 0 12 11" shape-rendering="crispEdges"><rect x="0" y="0" width="6" height="1" fill="#c4c4c4"/><rect x="6" y="0" width="2" height="1" fill="#ff1c00"/><rect x="8" y="0" width="1" height="1" fill="#000"/><rect x="9" y="0" width="2" height="1" fill="#ff1c00"/><rect x="0" y="1" width="4" height="1" fill="#c4c4c4"/><rect x="4" y="1" width="4" height="1" fill="#ff1c00"/><rect x="8" y="1" width="1" height="1" fill="#000"/><rect x="9" y="1" width="3" height="1" fill="#ff1c00"/><rect x="0" y="2" width="3" height="1" fill="#c4c4c4"/><rect x="3" y="2" width="4" height="1" fill="#ff1c00"/><rect x="7" y="2" width="2" height="1" fill="#000"/><rect x="9" y="2" width="3" height="1" fill="#ff1c00"/><rect x="0" y="3" width="2" height="1" fill="#c4c4c4"/><rect x="2" y="3" width="1" height="1" fill="#ff1c00"/><rect x="3" y="3" width="2" height="1" fill="#ffff00"/><rect x="5" y="3" width="7" height="1" fill="#ff1c00"/><rect x="0" y="4" width="2" height="1" fill="#c4c4c4"/><rect x="2" y="4" width="1" height="1" fill="#ff1c00"/><rect x="3" y="4" width="3" height="1" fill="#ffff00"/><rect x="6" y="4" width="5" height="1" fill="#ff1c00"/><rect x="0" y="5" width="2" height="1" fill="#ff1c00"/><rect x="2" y="5" width="2" height="1" fill="#ffff00"/><rect x="4" y="5" width="1" height="1" fill="#000"/><rect x="5" y="5" width="2" height="1" fill="#ffff00"/><rect x="7" y="5" width="2" height="1" fill="#ff1c00"/><rect x="9" y="5" width="2" height="1" fill="#a8a800"/><rect x="1" y="6" width="4" height="1" fill="#ffff00"/><rect x="5" y="6" width="1" height="1" fill="#000"/><rect x="6" y="6" width="2" height="1" fill="#ffff00"/><rect x="8" y="6" width="3" height="1" fill="#a8a800"/><rect x="1" y="7" width="7" height="1" fill="#ffff00"/><rect x="8" y="7" width="2" height="1" fill="#a8a800"/><rect x="10" y="7" width="1" height="1" fill="#000"/><rect x="1" y="8" width="2" height="1" fill="#ffff00"/><rect x="3" y="8" width="2" height="1" fill="#000"/><rect x="5" y="8" width="3" height="1" fill="#ffff00"/><rect x="8" y="8" width="2" height="1" fill="#a8a800"/><rect x="10" y="8" width="1" height="1" fill="#000"/><rect x="1" y="9" width="2" height="1" fill="#ffff00"/><rect x="3" y="9" width="2" height="1" fill="#000"/><rect x="5" y="9" width="3" height="1" fill="#ffff00"/><rect x="8" y="9" width="3" height="1" fill="#a8a800"/><rect x="1" y="10" width="7" height="1" fill="#ffff00"/><rect x="8" y="10" width="3" height="1" fill="#a8a800"/></svg><div class="a" style="left:151px;top:347px;width:13px;height:16px;background:#c8c8c8;"></div><div class="a" style="left:153px;top:349px;width:10px;height:10px;background:#d8d8d8;"></div><div class="a" style="left:154px;top:350px;width:8px;height:8px;background:#fff;"></div><div class="a" style="left:153px;top:349px;width:10px;height:1px;background:#000;"></div><div class="a" style="left:153px;top:349px;width:1px;height:10px;background:#000;"></div><div class="a" style="left:153px;top:359px;width:10px;height:1px;background:#fff;"></div><div class="t" style="left:193.03px;top:349px;font-size:12px;color:#000;transform:scaleX(0.9661);">31/03/2016</div><div class="t" style="left:256.07px;top:349px;font-size:12px;color:#000;transform:scaleX(0.9322);">681000000</div><div class="t" style="left:366.09px;top:349px;font-size:12px;color:#000;transform:scaleX(0.9143);">249,60</div><div class="t" style="left:784.09px;top:349px;font-size:12px;color:#000;transform:scaleX(0.9143);">249,60</div><div class="t" style="left:935.04px;top:349px;font-size:12px;color:#000;transform:scaleX(0.9600);">1818</div><div class="a" style="left:981px;top:346px;width:195px;height:18px;overflow:hidden"><div class="t" style="left:3.00px;top:3px;font-size:12px;color:#000;transform:scaleX(0.9032);">Amortización 31/03/2016 Elemento 1818</div></div><div class="t" style="left:1298.07px;top:349px;font-size:12px;color:#000;transform:scaleX(0.9322);">282000000</div><div class="a" style="left:9px;top:365px;width:18px;height:18px;background:#b3b3ff;"></div><div class="a" style="left:28px;top:365px;width:1351px;height:18px;background:#ffffff;"></div><div class="a" style="left:9px;top:383px;width:1370px;height:1px;background:#000;"></div><div class="t" style="left:42.30px;top:368px;font-size:12px;color:#000;transform:scaleX(0.9500);">6</div><svg class="a" style="left:133px;top:368px" width="12" height="11" viewBox="0 0 12 11" shape-rendering="crispEdges"><rect x="0" y="0" width="6" height="1" fill="#c4c4c4"/><rect x="6" y="0" width="2" height="1" fill="#ff1c00"/><rect x="8" y="0" width="1" height="1" fill="#000"/><rect x="9" y="0" width="2" height="1" fill="#ff1c00"/><rect x="0" y="1" width="4" height="1" fill="#c4c4c4"/><rect x="4" y="1" width="4" height="1" fill="#ff1c00"/><rect x="8" y="1" width="1" height="1" fill="#000"/><rect x="9" y="1" width="3" height="1" fill="#ff1c00"/><rect x="0" y="2" width="3" height="1" fill="#c4c4c4"/><rect x="3" y="2" width="4" height="1" fill="#ff1c00"/><rect x="7" y="2" width="2" height="1" fill="#000"/><rect x="9" y="2" width="3" height="1" fill="#ff1c00"/><rect x="0" y="3" width="2" height="1" fill="#c4c4c4"/><rect x="2" y="3" width="1" height="1" fill="#ff1c00"/><rect x="3" y="3" width="2" height="1" fill="#ffff00"/><rect x="5" y="3" width="7" height="1" fill="#ff1c00"/><rect x="0" y="4" width="2" height="1" fill="#c4c4c4"/><rect x="2" y="4" width="1" height="1" fill="#ff1c00"/><rect x="3" y="4" width="3" height="1" fill="#ffff00"/><rect x="6" y="4" width="5" height="1" fill="#ff1c00"/><rect x="0" y="5" width="2" height="1" fill="#ff1c00"/><rect x="2" y="5" width="2" height="1" fill="#ffff00"/><rect x="4" y="5" width="1" height="1" fill="#000"/><rect x="5" y="5" width="2" height="1" fill="#ffff00"/><rect x="7" y="5" width="2" height="1" fill="#ff1c00"/><rect x="9" y="5" width="2" height="1" fill="#a8a800"/><rect x="1" y="6" width="4" height="1" fill="#ffff00"/><rect x="5" y="6" width="1" height="1" fill="#000"/><rect x="6" y="6" width="2" height="1" fill="#ffff00"/><rect x="8" y="6" width="3" height="1" fill="#a8a800"/><rect x="1" y="7" width="7" height="1" fill="#ffff00"/><rect x="8" y="7" width="2" height="1" fill="#a8a800"/><rect x="10" y="7" width="1" height="1" fill="#000"/><rect x="1" y="8" width="2" height="1" fill="#ffff00"/><rect x="3" y="8" width="2" height="1" fill="#000"/><rect x="5" y="8" width="3" height="1" fill="#ffff00"/><rect x="8" y="8" width="2" height="1" fill="#a8a800"/><rect x="10" y="8" width="1" height="1" fill="#000"/><rect x="1" y="9" width="2" height="1" fill="#ffff00"/><rect x="3" y="9" width="2" height="1" fill="#000"/><rect x="5" y="9" width="3" height="1" fill="#ffff00"/><rect x="8" y="9" width="3" height="1" fill="#a8a800"/><rect x="1" y="10" width="7" height="1" fill="#ffff00"/><rect x="8" y="10" width="3" height="1" fill="#a8a800"/></svg><div class="a" style="left:151px;top:366px;width:13px;height:16px;background:#c8c8c8;"></div><div class="a" style="left:153px;top:368px;width:10px;height:10px;background:#d8d8d8;"></div><div class="a" style="left:154px;top:369px;width:8px;height:8px;background:#fff;"></div><div class="a" style="left:153px;top:368px;width:10px;height:1px;background:#000;"></div><div class="a" style="left:153px;top:368px;width:1px;height:10px;background:#000;"></div><div class="a" style="left:153px;top:378px;width:10px;height:1px;background:#fff;"></div><div class="t" style="left:193.03px;top:368px;font-size:12px;color:#000;transform:scaleX(0.9661);">31/03/2016</div><div class="t" style="left:256.07px;top:368px;font-size:12px;color:#000;transform:scaleX(0.9322);">282000000</div><div class="t" style="left:442.09px;top:368px;font-size:12px;color:#000;transform:scaleX(0.9143);">249,60</div><div class="t" style="left:858.09px;top:368px;font-size:12px;color:#000;transform:scaleX(0.9143);">249,60</div><div class="t" style="left:935.04px;top:368px;font-size:12px;color:#000;transform:scaleX(0.9600);">1818</div><div class="a" style="left:981px;top:365px;width:195px;height:18px;overflow:hidden"><div class="t" style="left:3.00px;top:3px;font-size:12px;color:#000;transform:scaleX(0.9032);">Amortización 31/03/2016 Elemento 1818</div></div><div class="t" style="left:1298.07px;top:368px;font-size:12px;color:#000;transform:scaleX(0.9322);">681000000</div><div class="a" style="left:9px;top:384px;width:18px;height:18px;background:#b3b3ff;"></div><div class="a" style="left:28px;top:384px;width:1351px;height:18px;background:#ccccff;"></div><div class="a" style="left:9px;top:402px;width:1370px;height:1px;background:#000;"></div><div class="t" style="left:42.30px;top:387px;font-size:12px;color:#000;transform:scaleX(0.9500);">7</div><svg class="a" style="left:133px;top:387px" width="12" height="11" viewBox="0 0 12 11" shape-rendering="crispEdges"><rect x="0" y="0" width="6" height="1" fill="#c4c4c4"/><rect x="6" y="0" width="2" height="1" fill="#ff1c00"/><rect x="8" y="0" width="1" height="1" fill="#000"/><rect x="9" y="0" width="2" height="1" fill="#ff1c00"/><rect x="0" y="1" width="4" height="1" fill="#c4c4c4"/><rect x="4" y="1" width="4" height="1" fill="#ff1c00"/><rect x="8" y="1" width="1" height="1" fill="#000"/><rect x="9" y="1" width="3" height="1" fill="#ff1c00"/><rect x="0" y="2" width="3" height="1" fill="#c4c4c4"/><rect x="3" y="2" width="4" height="1" fill="#ff1c00"/><rect x="7" y="2" width="2" height="1" fill="#000"/><rect x="9" y="2" width="3" height="1" fill="#ff1c00"/><rect x="0" y="3" width="2" height="1" fill="#c4c4c4"/><rect x="2" y="3" width="1" height="1" fill="#ff1c00"/><rect x="3" y="3" width="2" height="1" fill="#ffff00"/><rect x="5" y="3" width="7" height="1" fill="#ff1c00"/><rect x="0" y="4" width="2" height="1" fill="#c4c4c4"/><rect x="2" y="4" width="1" height="1" fill="#ff1c00"/><rect x="3" y="4" width="3" height="1" fill="#ffff00"/><rect x="6" y="4" width="5" height="1" fill="#ff1c00"/><rect x="0" y="5" width="2" height="1" fill="#ff1c00"/><rect x="2" y="5" width="2" height="1" fill="#ffff00"/><rect x="4" y="5" width="1" height="1" fill="#000"/><rect x="5" y="5" width="2" height="1" fill="#ffff00"/><rect x="7" y="5" width="2" height="1" fill="#ff1c00"/><rect x="9" y="5" width="2" height="1" fill="#a8a800"/><rect x="1" y="6" width="4" height="1" fill="#ffff00"/><rect x="5" y="6" width="1" height="1" fill="#000"/><rect x="6" y="6" width="2" height="1" fill="#ffff00"/><rect x="8" y="6" width="3" height="1" fill="#a8a800"/><rect x="1" y="7" width="7" height="1" fill="#ffff00"/><rect x="8" y="7" width="2" height="1" fill="#a8a800"/><rect x="10" y="7" width="1" height="1" fill="#000"/><rect x="1" y="8" width="2" height="1" fill="#ffff00"/><rect x="3" y="8" width="2" height="1" fill="#000"/><rect x="5" y="8" width="3" height="1" fill="#ffff00"/><rect x="8" y="8" width="2" height="1" fill="#a8a800"/><rect x="10" y="8" width="1" height="1" fill="#000"/><rect x="1" y="9" width="2" height="1" fill="#ffff00"/><rect x="3" y="9" width="2" height="1" fill="#000"/><rect x="5" y="9" width="3" height="1" fill="#ffff00"/><rect x="8" y="9" width="3" height="1" fill="#a8a800"/><rect x="1" y="10" width="7" height="1" fill="#ffff00"/><rect x="8" y="10" width="3" height="1" fill="#a8a800"/></svg><div class="a" style="left:151px;top:385px;width:13px;height:16px;background:#c8c8c8;"></div><div class="a" style="left:153px;top:387px;width:10px;height:10px;background:#d8d8d8;"></div><div class="a" style="left:154px;top:388px;width:8px;height:8px;background:#fff;"></div><div class="a" style="left:153px;top:387px;width:10px;height:1px;background:#000;"></div><div class="a" style="left:153px;top:387px;width:1px;height:10px;background:#000;"></div><div class="a" style="left:153px;top:397px;width:10px;height:1px;background:#fff;"></div><div class="t" style="left:193.03px;top:387px;font-size:12px;color:#000;transform:scaleX(0.9661);">30/04/2016</div><div class="t" style="left:256.07px;top:387px;font-size:12px;color:#000;transform:scaleX(0.9322);">681000000</div><div class="t" style="left:366.09px;top:387px;font-size:12px;color:#000;transform:scaleX(0.9143);">249,60</div><div class="t" style="left:784.09px;top:387px;font-size:12px;color:#000;transform:scaleX(0.9143);">249,60</div><div class="t" style="left:935.04px;top:387px;font-size:12px;color:#000;transform:scaleX(0.9600);">1818</div><div class="a" style="left:981px;top:384px;width:195px;height:18px;overflow:hidden"><div class="t" style="left:3.00px;top:3px;font-size:12px;color:#000;transform:scaleX(0.9032);">Amortización 30/04/2016 Elemento 1818</div></div><div class="t" style="left:1298.07px;top:387px;font-size:12px;color:#000;transform:scaleX(0.9322);">282000000</div><div class="a" style="left:9px;top:403px;width:18px;height:18px;background:#b3b3ff;"></div><div class="a" style="left:28px;top:403px;width:1351px;height:18px;background:#ffffff;"></div><div class="a" style="left:9px;top:421px;width:1370px;height:1px;background:#000;"></div><div class="t" style="left:42.30px;top:406px;font-size:12px;color:#000;transform:scaleX(0.9500);">8</div><svg class="a" style="left:133px;top:406px" width="12" height="11" viewBox="0 0 12 11" shape-rendering="crispEdges"><rect x="0" y="0" width="6" height="1" fill="#c4c4c4"/><rect x="6" y="0" width="2" height="1" fill="#ff1c00"/><rect x="8" y="0" width="1" height="1" fill="#000"/><rect x="9" y="0" width="2" height="1" fill="#ff1c00"/><rect x="0" y="1" width="4" height="1" fill="#c4c4c4"/><rect x="4" y="1" width="4" height="1" fill="#ff1c00"/><rect x="8" y="1" width="1" height="1" fill="#000"/><rect x="9" y="1" width="3" height="1" fill="#ff1c00"/><rect x="0" y="2" width="3" height="1" fill="#c4c4c4"/><rect x="3" y="2" width="4" height="1" fill="#ff1c00"/><rect x="7" y="2" width="2" height="1" fill="#000"/><rect x="9" y="2" width="3" height="1" fill="#ff1c00"/><rect x="0" y="3" width="2" height="1" fill="#c4c4c4"/><rect x="2" y="3" width="1" height="1" fill="#ff1c00"/><rect x="3" y="3" width="2" height="1" fill="#ffff00"/><rect x="5" y="3" width="7" height="1" fill="#ff1c00"/><rect x="0" y="4" width="2" height="1" fill="#c4c4c4"/><rect x="2" y="4" width="1" height="1" fill="#ff1c00"/><rect x="3" y="4" width="3" height="1" fill="#ffff00"/><rect x="6" y="4" width="5" height="1" fill="#ff1c00"/><rect x="0" y="5" width="2" height="1" fill="#ff1c00"/><rect x="2" y="5" width="2" height="1" fill="#ffff00"/><rect x="4" y="5" width="1" height="1" fill="#000"/><rect x="5" y="5" width="2" height="1" fill="#ffff00"/><rect x="7" y="5" width="2" height="1" fill="#ff1c00"/><rect x="9" y="5" width="2" height="1" fill="#a8a800"/><rect x="1" y="6" width="4" height="1" fill="#ffff00"/><rect x="5" y="6" width="1" height="1" fill="#000"/><rect x="6" y="6" width="2" height="1" fill="#ffff00"/><rect x="8" y="6" width="3" height="1" fill="#a8a800"/><rect x="1" y="7" width="7" height="1" fill="#ffff00"/><rect x="8" y="7" width="2" height="1" fill="#a8a800"/><rect x="10" y="7" width="1" height="1" fill="#000"/><rect x="1" y="8" width="2" height="1" fill="#ffff00"/><rect x="3" y="8" width="2" height="1" fill="#000"/><rect x="5" y="8" width="3" height="1" fill="#ffff00"/><rect x="8" y="8" width="2" height="1" fill="#a8a800"/><rect x="10" y="8" width="1" height="1" fill="#000"/><rect x="1" y="9" width="2" height="1" fill="#ffff00"/><rect x="3" y="9" width="2" height="1" fill="#000"/><rect x="5" y="9" width="3" height="1" fill="#ffff00"/><rect x="8" y="9" width="3" height="1" fill="#a8a800"/><rect x="1" y="10" width="7" height="1" fill="#ffff00"/><rect x="8" y="10" width="3" height="1" fill="#a8a800"/></svg><div class="a" style="left:151px;top:404px;width:13px;height:16px;background:#c8c8c8;"></div><div class="a" style="left:153px;top:406px;width:10px;height:10px;background:#d8d8d8;"></div><div class="a" style="left:154px;top:407px;width:8px;height:8px;background:#fff;"></div><div class="a" style="left:153px;top:406px;width:10px;height:1px;background:#000;"></div><div class="a" style="left:153px;top:406px;width:1px;height:10px;background:#000;"></div><div class="a" style="left:153px;top:416px;width:10px;height:1px;background:#fff;"></div><div class="t" style="left:193.03px;top:406px;font-size:12px;color:#000;transform:scaleX(0.9661);">30/04/2016</div><div class="t" style="left:256.07px;top:406px;font-size:12px;color:#000;transform:scaleX(0.9322);">282000000</div><div class="t" style="left:442.09px;top:406px;font-size:12px;color:#000;transform:scaleX(0.9143);">249,60</div><div class="t" style="left:858.09px;top:406px;font-size:12px;color:#000;transform:scaleX(0.9143);">249,60</div><div class="t" style="left:935.04px;top:406px;font-size:12px;color:#000;transform:scaleX(0.9600);">1818</div><div class="a" style="left:981px;top:403px;width:195px;height:18px;overflow:hidden"><div class="t" style="left:3.00px;top:3px;font-size:12px;color:#000;transform:scaleX(0.9032);">Amortización 30/04/2016 Elemento 1818</div></div><div class="t" style="left:1298.07px;top:406px;font-size:12px;color:#000;transform:scaleX(0.9322);">681000000</div><div class="a" style="left:9px;top:422px;width:18px;height:18px;background:#b3b3ff;"></div><div class="a" style="left:28px;top:422px;width:1351px;height:18px;background:#ccccff;"></div><div class="a" style="left:9px;top:440px;width:1370px;height:1px;background:#000;"></div><div class="t" style="left:42.30px;top:425px;font-size:12px;color:#000;transform:scaleX(0.9500);">9</div><svg class="a" style="left:133px;top:425px" width="12" height="11" viewBox="0 0 12 11" shape-rendering="crispEdges"><rect x="0" y="0" width="6" height="1" fill="#c4c4c4"/><rect x="6" y="0" width="2" height="1" fill="#ff1c00"/><rect x="8" y="0" width="1" height="1" fill="#000"/><rect x="9" y="0" width="2" height="1" fill="#ff1c00"/><rect x="0" y="1" width="4" height="1" fill="#c4c4c4"/><rect x="4" y="1" width="4" height="1" fill="#ff1c00"/><rect x="8" y="1" width="1" height="1" fill="#000"/><rect x="9" y="1" width="3" height="1" fill="#ff1c00"/><rect x="0" y="2" width="3" height="1" fill="#c4c4c4"/><rect x="3" y="2" width="4" height="1" fill="#ff1c00"/><rect x="7" y="2" width="2" height="1" fill="#000"/><rect x="9" y="2" width="3" height="1" fill="#ff1c00"/><rect x="0" y="3" width="2" height="1" fill="#c4c4c4"/><rect x="2" y="3" width="1" height="1" fill="#ff1c00"/><rect x="3" y="3" width="2" height="1" fill="#ffff00"/><rect x="5" y="3" width="7" height="1" fill="#ff1c00"/><rect x="0" y="4" width="2" height="1" fill="#c4c4c4"/><rect x="2" y="4" width="1" height="1" fill="#ff1c00"/><rect x="3" y="4" width="3" height="1" fill="#ffff00"/><rect x="6" y="4" width="5" height="1" fill="#ff1c00"/><rect x="0" y="5" width="2" height="1" fill="#ff1c00"/><rect x="2" y="5" width="2" height="1" fill="#ffff00"/><rect x="4" y="5" width="1" height="1" fill="#000"/><rect x="5" y="5" width="2" height="1" fill="#ffff00"/><rect x="7" y="5" width="2" height="1" fill="#ff1c00"/><rect x="9" y="5" width="2" height="1" fill="#a8a800"/><rect x="1" y="6" width="4" height="1" fill="#ffff00"/><rect x="5" y="6" width="1" height="1" fill="#000"/><rect x="6" y="6" width="2" height="1" fill="#ffff00"/><rect x="8" y="6" width="3" height="1" fill="#a8a800"/><rect x="1" y="7" width="7" height="1" fill="#ffff00"/><rect x="8" y="7" width="2" height="1" fill="#a8a800"/><rect x="10" y="7" width="1" height="1" fill="#000"/><rect x="1" y="8" width="2" height="1" fill="#ffff00"/><rect x="3" y="8" width="2" height="1" fill="#000"/><rect x="5" y="8" width="3" height="1" fill="#ffff00"/><rect x="8" y="8" width="2" height="1" fill="#a8a800"/><rect x="10" y="8" width="1" height="1" fill="#000"/><rect x="1" y="9" width="2" height="1" fill="#ffff00"/><rect x="3" y="9" width="2" height="1" fill="#000"/><rect x="5" y="9" width="3" height="1" fill="#ffff00"/><rect x="8" y="9" width="3" height="1" fill="#a8a800"/><rect x="1" y="10" width="7" height="1" fill="#ffff00"/><rect x="8" y="10" width="3" height="1" fill="#a8a800"/></svg><div class="a" style="left:151px;top:423px;width:13px;height:16px;background:#c8c8c8;"></div><div class="a" style="left:153px;top:425px;width:10px;height:10px;background:#d8d8d8;"></div><div class="a" style="left:154px;top:426px;width:8px;height:8px;background:#fff;"></div><div class="a" style="left:153px;top:425px;width:10px;height:1px;background:#000;"></div><div class="a" style="left:153px;top:425px;width:1px;height:10px;background:#000;"></div><div class="a" style="left:153px;top:435px;width:10px;height:1px;background:#fff;"></div><div class="t" style="left:193.03px;top:425px;font-size:12px;color:#000;transform:scaleX(0.9661);">31/05/2016</div><div class="t" style="left:256.07px;top:425px;font-size:12px;color:#000;transform:scaleX(0.9322);">681000000</div><div class="t" style="left:366.09px;top:425px;font-size:12px;color:#000;transform:scaleX(0.9143);">249,60</div><div class="t" style="left:784.09px;top:425px;font-size:12px;color:#000;transform:scaleX(0.9143);">249,60</div><div class="t" style="left:935.04px;top:425px;font-size:12px;color:#000;transform:scaleX(0.9600);">1818</div><div class="a" style="left:981px;top:422px;width:195px;height:18px;overflow:hidden"><div class="t" style="left:3.00px;top:3px;font-size:12px;color:#000;transform:scaleX(0.9032);">Amortización 31/05/2016 Elemento 1818</div></div><div class="t" style="left:1298.07px;top:425px;font-size:12px;color:#000;transform:scaleX(0.9322);">282000000</div><div class="a" style="left:9px;top:441px;width:18px;height:18px;background:#b3b3ff;"></div><div class="a" style="left:28px;top:441px;width:1351px;height:18px;background:#ffffff;"></div><div class="a" style="left:9px;top:459px;width:1370px;height:1px;background:#000;"></div><div class="t" style="left:35.65px;top:444px;font-size:12px;color:#000;transform:scaleX(0.9500);">10</div><svg class="a" style="left:133px;top:444px" width="12" height="11" viewBox="0 0 12 11" shape-rendering="crispEdges"><rect x="0" y="0" width="6" height="1" fill="#c4c4c4"/><rect x="6" y="0" width="2" height="1" fill="#ff1c00"/><rect x="8" y="0" width="1" height="1" fill="#000"/><rect x="9" y="0" width="2" height="1" fill="#ff1c00"/><rect x="0" y="1" width="4" height="1" fill="#c4c4c4"/><rect x="4" y="1" width="4" height="1" fill="#ff1c00"/><rect x="8" y="1" width="1" height="1" fill="#000"/><rect x="9" y="1" width="3" height="1" fill="#ff1c00"/><rect x="0" y="2" width="3" height="1" fill="#c4c4c4"/><rect x="3" y="2" width="4" height="1" fill="#ff1c00"/><rect x="7" y="2" width="2" height="1" fill="#000"/><rect x="9" y="2" width="3" height="1" fill="#ff1c00"/><rect x="0" y="3" width="2" height="1" fill="#c4c4c4"/><rect x="2" y="3" width="1" height="1" fill="#ff1c00"/><rect x="3" y="3" width="2" height="1" fill="#ffff00"/><rect x="5" y="3" width="7" height="1" fill="#ff1c00"/><rect x="0" y="4" width="2" height="1" fill="#c4c4c4"/><rect x="2" y="4" width="1" height="1" fill="#ff1c00"/><rect x="3" y="4" width="3" height="1" fill="#ffff00"/><rect x="6" y="4" width="5" height="1" fill="#ff1c00"/><rect x="0" y="5" width="2" height="1" fill="#ff1c00"/><rect x="2" y="5" width="2" height="1" fill="#ffff00"/><rect x="4" y="5" width="1" height="1" fill="#000"/><rect x="5" y="5" width="2" height="1" fill="#ffff00"/><rect x="7" y="5" width="2" height="1" fill="#ff1c00"/><rect x="9" y="5" width="2" height="1" fill="#a8a800"/><rect x="1" y="6" width="4" height="1" fill="#ffff00"/><rect x="5" y="6" width="1" height="1" fill="#000"/><rect x="6" y="6" width="2" height="1" fill="#ffff00"/><rect x="8" y="6" width="3" height="1" fill="#a8a800"/><rect x="1" y="7" width="7" height="1" fill="#ffff00"/><rect x="8" y="7" width="2" height="1" fill="#a8a800"/><rect x="10" y="7" width="1" height="1" fill="#000"/><rect x="1" y="8" width="2" height="1" fill="#ffff00"/><rect x="3" y="8" width="2" height="1" fill="#000"/><rect x="5" y="8" width="3" height="1" fill="#ffff00"/><rect x="8" y="8" width="2" height="1" fill="#a8a800"/><rect x="10" y="8" width="1" height="1" fill="#000"/><rect x="1" y="9" width="2" height="1" fill="#ffff00"/><rect x="3" y="9" width="2" height="1" fill="#000"/><rect x="5" y="9" width="3" height="1" fill="#ffff00"/><rect x="8" y="9" width="3" height="1" fill="#a8a800"/><rect x="1" y="10" width="7" height="1" fill="#ffff00"/><rect x="8" y="10" width="3" height="1" fill="#a8a800"/></svg><div class="a" style="left:151px;top:442px;width:13px;height:16px;background:#c8c8c8;"></div><div class="a" style="left:153px;top:444px;width:10px;height:10px;background:#d8d8d8;"></div><div class="a" style="left:154px;top:445px;width:8px;height:8px;background:#fff;"></div><div class="a" style="left:153px;top:444px;width:10px;height:1px;background:#000;"></div><div class="a" style="left:153px;top:444px;width:1px;height:10px;background:#000;"></div><div class="a" style="left:153px;top:454px;width:10px;height:1px;background:#fff;"></div><div class="t" style="left:193.03px;top:444px;font-size:12px;color:#000;transform:scaleX(0.9661);">31/05/2016</div><div class="t" style="left:256.07px;top:444px;font-size:12px;color:#000;transform:scaleX(0.9322);">282000000</div><div class="t" style="left:442.09px;top:444px;font-size:12px;color:#000;transform:scaleX(0.9143);">249,60</div><div class="t" style="left:858.09px;top:444px;font-size:12px;color:#000;transform:scaleX(0.9143);">249,60</div><div class="t" style="left:935.04px;top:444px;font-size:12px;color:#000;transform:scaleX(0.9600);">1818</div><div class="a" style="left:981px;top:441px;width:195px;height:18px;overflow:hidden"><div class="t" style="left:3.00px;top:3px;font-size:12px;color:#000;transform:scaleX(0.9032);">Amortización 31/05/2016 Elemento 1818</div></div><div class="t" style="left:1298.07px;top:444px;font-size:12px;color:#000;transform:scaleX(0.9322);">681000000</div><div class="a" style="left:9px;top:460px;width:18px;height:18px;background:#b3b3ff;"></div><div class="a" style="left:28px;top:460px;width:1351px;height:18px;background:#ccccff;"></div><div class="a" style="left:9px;top:478px;width:1370px;height:1px;background:#000;"></div><div class="t" style="left:35.60px;top:463px;font-size:12px;color:#000;transform:scaleX(0.9500);">11</div><svg class="a" style="left:133px;top:463px" width="12" height="11" viewBox="0 0 12 11" shape-rendering="crispEdges"><rect x="0" y="0" width="6" height="1" fill="#c4c4c4"/><rect x="6" y="0" width="2" height="1" fill="#ff1c00"/><rect x="8" y="0" width="1" height="1" fill="#000"/><rect x="9" y="0" width="2" height="1" fill="#ff1c00"/><rect x="0" y="1" width="4" height="1" fill="#c4c4c4"/><rect x="4" y="1" width="4" height="1" fill="#ff1c00"/><rect x="8" y="1" width="1" height="1" fill="#000"/><rect x="9" y="1" width="3" height="1" fill="#ff1c00"/><rect x="0" y="2" width="3" height="1" fill="#c4c4c4"/><rect x="3" y="2" width="4" height="1" fill="#ff1c00"/><rect x="7" y="2" width="2" height="1" fill="#000"/><rect x="9" y="2" width="3" height="1" fill="#ff1c00"/><rect x="0" y="3" width="2" height="1" fill="#c4c4c4"/><rect x="2" y="3" width="1" height="1" fill="#ff1c00"/><rect x="3" y="3" width="2" height="1" fill="#ffff00"/><rect x="5" y="3" width="7" height="1" fill="#ff1c00"/><rect x="0" y="4" width="2" height="1" fill="#c4c4c4"/><rect x="2" y="4" width="1" height="1" fill="#ff1c00"/><rect x="3" y="4" width="3" height="1" fill="#ffff00"/><rect x="6" y="4" width="5" height="1" fill="#ff1c00"/><rect x="0" y="5" width="2" height="1" fill="#ff1c00"/><rect x="2" y="5" width="2" height="1" fill="#ffff00"/><rect x="4" y="5" width="1" height="1" fill="#000"/><rect x="5" y="5" width="2" height="1" fill="#ffff00"/><rect x="7" y="5" width="2" height="1" fill="#ff1c00"/><rect x="9" y="5" width="2" height="1" fill="#a8a800"/><rect x="1" y="6" width="4" height="1" fill="#ffff00"/><rect x="5" y="6" width="1" height="1" fill="#000"/><rect x="6" y="6" width="2" height="1" fill="#ffff00"/><rect x="8" y="6" width="3" height="1" fill="#a8a800"/><rect x="1" y="7" width="7" height="1" fill="#ffff00"/><rect x="8" y="7" width="2" height="1" fill="#a8a800"/><rect x="10" y="7" width="1" height="1" fill="#000"/><rect x="1" y="8" width="2" height="1" fill="#ffff00"/><rect x="3" y="8" width="2" height="1" fill="#000"/><rect x="5" y="8" width="3" height="1" fill="#ffff00"/><rect x="8" y="8" width="2" height="1" fill="#a8a800"/><rect x="10" y="8" width="1" height="1" fill="#000"/><rect x="1" y="9" width="2" height="1" fill="#ffff00"/><rect x="3" y="9" width="2" height="1" fill="#000"/><rect x="5" y="9" width="3" height="1" fill="#ffff00"/><rect x="8" y="9" width="3" height="1" fill="#a8a800"/><rect x="1" y="10" width="7" height="1" fill="#ffff00"/><rect x="8" y="10" width="3" height="1" fill="#a8a800"/></svg><div class="a" style="left:151px;top:461px;width:13px;height:16px;background:#c8c8c8;"></div><div class="a" style="left:153px;top:463px;width:10px;height:10px;background:#d8d8d8;"></div><div class="a" style="left:154px;top:464px;width:8px;height:8px;background:#fff;"></div><div class="a" style="left:153px;top:463px;width:10px;height:1px;background:#000;"></div><div class="a" style="left:153px;top:463px;width:1px;height:10px;background:#000;"></div><div class="a" style="left:153px;top:473px;width:10px;height:1px;background:#fff;"></div><div class="t" style="left:193.03px;top:463px;font-size:12px;color:#000;transform:scaleX(0.9661);">30/06/2016</div><div class="t" style="left:256.07px;top:463px;font-size:12px;color:#000;transform:scaleX(0.9322);">681000000</div><div class="t" style="left:366.09px;top:463px;font-size:12px;color:#000;transform:scaleX(0.9143);">249,60</div><div class="t" style="left:784.09px;top:463px;font-size:12px;color:#000;transform:scaleX(0.9143);">249,60</div><div class="t" style="left:935.04px;top:463px;font-size:12px;color:#000;transform:scaleX(0.9600);">1818</div><div class="a" style="left:981px;top:460px;width:195px;height:18px;overflow:hidden"><div class="t" style="left:3.00px;top:3px;font-size:12px;color:#000;transform:scaleX(0.9032);">Amortización 30/06/2016 Elemento 1818</div></div><div class="t" style="left:1298.07px;top:463px;font-size:12px;color:#000;transform:scaleX(0.9322);">282000000</div><div class="a" style="left:9px;top:479px;width:18px;height:18px;background:#b3b3ff;"></div><div class="a" style="left:28px;top:479px;width:1351px;height:18px;background:#ffffff;"></div><div class="a" style="left:9px;top:497px;width:1370px;height:1px;background:#000;"></div><div class="t" style="left:35.65px;top:482px;font-size:12px;color:#000;transform:scaleX(0.9500);">12</div><svg class="a" style="left:133px;top:482px" width="12" height="11" viewBox="0 0 12 11" shape-rendering="crispEdges"><rect x="0" y="0" width="6" height="1" fill="#c4c4c4"/><rect x="6" y="0" width="2" height="1" fill="#ff1c00"/><rect x="8" y="0" width="1" height="1" fill="#000"/><rect x="9" y="0" width="2" height="1" fill="#ff1c00"/><rect x="0" y="1" width="4" height="1" fill="#c4c4c4"/><rect x="4" y="1" width="4" height="1" fill="#ff1c00"/><rect x="8" y="1" width="1" height="1" fill="#000"/><rect x="9" y="1" width="3" height="1" fill="#ff1c00"/><rect x="0" y="2" width="3" height="1" fill="#c4c4c4"/><rect x="3" y="2" width="4" height="1" fill="#ff1c00"/><rect x="7" y="2" width="2" height="1" fill="#000"/><rect x="9" y="2" width="3" height="1" fill="#ff1c00"/><rect x="0" y="3" width="2" height="1" fill="#c4c4c4"/><rect x="2" y="3" width="1" height="1" fill="#ff1c00"/><rect x="3" y="3" width="2" height="1" fill="#ffff00"/><rect x="5" y="3" width="7" height="1" fill="#ff1c00"/><rect x="0" y="4" width="2" height="1" fill="#c4c4c4"/><rect x="2" y="4" width="1" height="1" fill="#ff1c00"/><rect x="3" y="4" width="3" height="1" fill="#ffff00"/><rect x="6" y="4" width="5" height="1" fill="#ff1c00"/><rect x="0" y="5" width="2" height="1" fill="#ff1c00"/><rect x="2" y="5" width="2" height="1" fill="#ffff00"/><rect x="4" y="5" width="1" height="1" fill="#000"/><rect x="5" y="5" width="2" height="1" fill="#ffff00"/><rect x="7" y="5" width="2" height="1" fill="#ff1c00"/><rect x="9" y="5" width="2" height="1" fill="#a8a800"/><rect x="1" y="6" width="4" height="1" fill="#ffff00"/><rect x="5" y="6" width="1" height="1" fill="#000"/><rect x="6" y="6" width="2" height="1" fill="#ffff00"/><rect x="8" y="6" width="3" height="1" fill="#a8a800"/><rect x="1" y="7" width="7" height="1" fill="#ffff00"/><rect x="8" y="7" width="2" height="1" fill="#a8a800"/><rect x="10" y="7" width="1" height="1" fill="#000"/><rect x="1" y="8" width="2" height="1" fill="#ffff00"/><rect x="3" y="8" width="2" height="1" fill="#000"/><rect x="5" y="8" width="3" height="1" fill="#ffff00"/><rect x="8" y="8" width="2" height="1" fill="#a8a800"/><rect x="10" y="8" width="1" height="1" fill="#000"/><rect x="1" y="9" width="2" height="1" fill="#ffff00"/><rect x="3" y="9" width="2" height="1" fill="#000"/><rect x="5" y="9" width="3" height="1" fill="#ffff00"/><rect x="8" y="9" width="3" height="1" fill="#a8a800"/><rect x="1" y="10" width="7" height="1" fill="#ffff00"/><rect x="8" y="10" width="3" height="1" fill="#a8a800"/></svg><div class="a" style="left:151px;top:480px;width:13px;height:16px;background:#c8c8c8;"></div><div class="a" style="left:153px;top:482px;width:10px;height:10px;background:#d8d8d8;"></div><div class="a" style="left:154px;top:483px;width:8px;height:8px;background:#fff;"></div><div class="a" style="left:153px;top:482px;width:10px;height:1px;background:#000;"></div><div class="a" style="left:153px;top:482px;width:1px;height:10px;background:#000;"></div><div class="a" style="left:153px;top:492px;width:10px;height:1px;background:#fff;"></div><div class="t" style="left:193.03px;top:482px;font-size:12px;color:#000;transform:scaleX(0.9661);">30/06/2016</div><div class="t" style="left:256.07px;top:482px;font-size:12px;color:#000;transform:scaleX(0.9322);">282000000</div><div class="t" style="left:442.09px;top:482px;font-size:12px;color:#000;transform:scaleX(0.9143);">249,60</div><div class="t" style="left:858.09px;top:482px;font-size:12px;color:#000;transform:scaleX(0.9143);">249,60</div><div class="t" style="left:935.04px;top:482px;font-size:12px;color:#000;transform:scaleX(0.9600);">1818</div><div class="a" style="left:981px;top:479px;width:195px;height:18px;overflow:hidden"><div class="t" style="left:3.00px;top:3px;font-size:12px;color:#000;transform:scaleX(0.9032);">Amortización 30/06/2016 Elemento 1818</div></div><div class="t" style="left:1298.07px;top:482px;font-size:12px;color:#000;transform:scaleX(0.9322);">681000000</div><div class="a" style="left:9px;top:498px;width:18px;height:18px;background:#b3b3ff;"></div><div class="a" style="left:28px;top:498px;width:1351px;height:18px;background:#ccccff;"></div><div class="a" style="left:9px;top:516px;width:1370px;height:1px;background:#000;"></div><div class="t" style="left:35.65px;top:501px;font-size:12px;color:#000;transform:scaleX(0.9500);">13</div><svg class="a" style="left:133px;top:501px" width="12" height="11" viewBox="0 0 12 11" shape-rendering="crispEdges"><rect x="0" y="0" width="6" height="1" fill="#c4c4c4"/><rect x="6" y="0" width="2" height="1" fill="#ff1c00"/><rect x="8" y="0" width="1" height="1" fill="#000"/><rect x="9" y="0" width="2" height="1" fill="#ff1c00"/><rect x="0" y="1" width="4" height="1" fill="#c4c4c4"/><rect x="4" y="1" width="4" height="1" fill="#ff1c00"/><rect x="8" y="1" width="1" height="1" fill="#000"/><rect x="9" y="1" width="3" height="1" fill="#ff1c00"/><rect x="0" y="2" width="3" height="1" fill="#c4c4c4"/><rect x="3" y="2" width="4" height="1" fill="#ff1c00"/><rect x="7" y="2" width="2" height="1" fill="#000"/><rect x="9" y="2" width="3" height="1" fill="#ff1c00"/><rect x="0" y="3" width="2" height="1" fill="#c4c4c4"/><rect x="2" y="3" width="1" height="1" fill="#ff1c00"/><rect x="3" y="3" width="2" height="1" fill="#ffff00"/><rect x="5" y="3" width="7" height="1" fill="#ff1c00"/><rect x="0" y="4" width="2" height="1" fill="#c4c4c4"/><rect x="2" y="4" width="1" height="1" fill="#ff1c00"/><rect x="3" y="4" width="3" height="1" fill="#ffff00"/><rect x="6" y="4" width="5" height="1" fill="#ff1c00"/><rect x="0" y="5" width="2" height="1" fill="#ff1c00"/><rect x="2" y="5" width="2" height="1" fill="#ffff00"/><rect x="4" y="5" width="1" height="1" fill="#000"/><rect x="5" y="5" width="2" height="1" fill="#ffff00"/><rect x="7" y="5" width="2" height="1" fill="#ff1c00"/><rect x="9" y="5" width="2" height="1" fill="#a8a800"/><rect x="1" y="6" width="4" height="1" fill="#ffff00"/><rect x="5" y="6" width="1" height="1" fill="#000"/><rect x="6" y="6" width="2" height="1" fill="#ffff00"/><rect x="8" y="6" width="3" height="1" fill="#a8a800"/><rect x="1" y="7" width="7" height="1" fill="#ffff00"/><rect x="8" y="7" width="2" height="1" fill="#a8a800"/><rect x="10" y="7" width="1" height="1" fill="#000"/><rect x="1" y="8" width="2" height="1" fill="#ffff00"/><rect x="3" y="8" width="2" height="1" fill="#000"/><rect x="5" y="8" width="3" height="1" fill="#ffff00"/><rect x="8" y="8" width="2" height="1" fill="#a8a800"/><rect x="10" y="8" width="1" height="1" fill="#000"/><rect x="1" y="9" width="2" height="1" fill="#ffff00"/><rect x="3" y="9" width="2" height="1" fill="#000"/><rect x="5" y="9" width="3" height="1" fill="#ffff00"/><rect x="8" y="9" width="3" height="1" fill="#a8a800"/><rect x="1" y="10" width="7" height="1" fill="#ffff00"/><rect x="8" y="10" width="3" height="1" fill="#a8a800"/></svg><div class="a" style="left:151px;top:499px;width:13px;height:16px;background:#c8c8c8;"></div><div class="a" style="left:153px;top:501px;width:10px;height:10px;background:#d8d8d8;"></div><div class="a" style="left:154px;top:502px;width:8px;height:8px;background:#fff;"></div><div class="a" style="left:153px;top:501px;width:10px;height:1px;background:#000;"></div><div class="a" style="left:153px;top:501px;width:1px;height:10px;background:#000;"></div><div class="a" style="left:153px;top:511px;width:10px;height:1px;background:#fff;"></div><div class="t" style="left:193.03px;top:501px;font-size:12px;color:#000;transform:scaleX(0.9661);">31/07/2016</div><div class="t" style="left:256.07px;top:501px;font-size:12px;color:#000;transform:scaleX(0.9322);">681000000</div><div class="t" style="left:366.09px;top:501px;font-size:12px;color:#000;transform:scaleX(0.9143);">249,60</div><div class="t" style="left:784.09px;top:501px;font-size:12px;color:#000;transform:scaleX(0.9143);">249,60</div><div class="t" style="left:935.04px;top:501px;font-size:12px;color:#000;transform:scaleX(0.9600);">1818</div><div class="a" style="left:981px;top:498px;width:195px;height:18px;overflow:hidden"><div class="t" style="left:3.00px;top:3px;font-size:12px;color:#000;transform:scaleX(0.9032);">Amortización 31/07/2016 Elemento 1818</div></div><div class="t" style="left:1298.07px;top:501px;font-size:12px;color:#000;transform:scaleX(0.9322);">282000000</div><div class="a" style="left:9px;top:517px;width:18px;height:18px;background:#b3b3ff;"></div><div class="a" style="left:28px;top:517px;width:1351px;height:18px;background:#ffffff;"></div><div class="a" style="left:9px;top:535px;width:1370px;height:1px;background:#000;"></div><div class="t" style="left:35.65px;top:520px;font-size:12px;color:#000;transform:scaleX(0.9500);">14</div><svg class="a" style="left:133px;top:520px" width="12" height="11" viewBox="0 0 12 11" shape-rendering="crispEdges"><rect x="0" y="0" width="6" height="1" fill="#c4c4c4"/><rect x="6" y="0" width="2" height="1" fill="#ff1c00"/><rect x="8" y="0" width="1" height="1" fill="#000"/><rect x="9" y="0" width="2" height="1" fill="#ff1c00"/><rect x="0" y="1" width="4" height="1" fill="#c4c4c4"/><rect x="4" y="1" width="4" height="1" fill="#ff1c00"/><rect x="8" y="1" width="1" height="1" fill="#000"/><rect x="9" y="1" width="3" height="1" fill="#ff1c00"/><rect x="0" y="2" width="3" height="1" fill="#c4c4c4"/><rect x="3" y="2" width="4" height="1" fill="#ff1c00"/><rect x="7" y="2" width="2" height="1" fill="#000"/><rect x="9" y="2" width="3" height="1" fill="#ff1c00"/><rect x="0" y="3" width="2" height="1" fill="#c4c4c4"/><rect x="2" y="3" width="1" height="1" fill="#ff1c00"/><rect x="3" y="3" width="2" height="1" fill="#ffff00"/><rect x="5" y="3" width="7" height="1" fill="#ff1c00"/><rect x="0" y="4" width="2" height="1" fill="#c4c4c4"/><rect x="2" y="4" width="1" height="1" fill="#ff1c00"/><rect x="3" y="4" width="3" height="1" fill="#ffff00"/><rect x="6" y="4" width="5" height="1" fill="#ff1c00"/><rect x="0" y="5" width="2" height="1" fill="#ff1c00"/><rect x="2" y="5" width="2" height="1" fill="#ffff00"/><rect x="4" y="5" width="1" height="1" fill="#000"/><rect x="5" y="5" width="2" height="1" fill="#ffff00"/><rect x="7" y="5" width="2" height="1" fill="#ff1c00"/><rect x="9" y="5" width="2" height="1" fill="#a8a800"/><rect x="1" y="6" width="4" height="1" fill="#ffff00"/><rect x="5" y="6" width="1" height="1" fill="#000"/><rect x="6" y="6" width="2" height="1" fill="#ffff00"/><rect x="8" y="6" width="3" height="1" fill="#a8a800"/><rect x="1" y="7" width="7" height="1" fill="#ffff00"/><rect x="8" y="7" width="2" height="1" fill="#a8a800"/><rect x="10" y="7" width="1" height="1" fill="#000"/><rect x="1" y="8" width="2" height="1" fill="#ffff00"/><rect x="3" y="8" width="2" height="1" fill="#000"/><rect x="5" y="8" width="3" height="1" fill="#ffff00"/><rect x="8" y="8" width="2" height="1" fill="#a8a800"/><rect x="10" y="8" width="1" height="1" fill="#000"/><rect x="1" y="9" width="2" height="1" fill="#ffff00"/><rect x="3" y="9" width="2" height="1" fill="#000"/><rect x="5" y="9" width="3" height="1" fill="#ffff00"/><rect x="8" y="9" width="3" height="1" fill="#a8a800"/><rect x="1" y="10" width="7" height="1" fill="#ffff00"/><rect x="8" y="10" width="3" height="1" fill="#a8a800"/></svg><div class="a" style="left:151px;top:518px;width:13px;height:16px;background:#c8c8c8;"></div><div class="a" style="left:153px;top:520px;width:10px;height:10px;background:#d8d8d8;"></div><div class="a" style="left:154px;top:521px;width:8px;height:8px;background:#fff;"></div><div class="a" style="left:153px;top:520px;width:10px;height:1px;background:#000;"></div><div class="a" style="left:153px;top:520px;width:1px;height:10px;background:#000;"></div><div class="a" style="left:153px;top:530px;width:10px;height:1px;background:#fff;"></div><div class="t" style="left:193.03px;top:520px;font-size:12px;color:#000;transform:scaleX(0.9661);">31/07/2016</div><div class="t" style="left:256.07px;top:520px;font-size:12px;color:#000;transform:scaleX(0.9322);">282000000</div><div class="t" style="left:442.09px;top:520px;font-size:12px;color:#000;transform:scaleX(0.9143);">249,60</div><div class="t" style="left:858.09px;top:520px;font-size:12px;color:#000;transform:scaleX(0.9143);">249,60</div><div class="t" style="left:935.04px;top:520px;font-size:12px;color:#000;transform:scaleX(0.9600);">1818</div><div class="a" style="left:981px;top:517px;width:195px;height:18px;overflow:hidden"><div class="t" style="left:3.00px;top:3px;font-size:12px;color:#000;transform:scaleX(0.9032);">Amortización 31/07/2016 Elemento 1818</div></div><div class="t" style="left:1298.07px;top:520px;font-size:12px;color:#000;transform:scaleX(0.9322);">681000000</div><div class="a" style="left:9px;top:536px;width:18px;height:18px;background:#b3b3ff;"></div><div class="a" style="left:28px;top:536px;width:1351px;height:18px;background:#ccccff;"></div><div class="a" style="left:9px;top:554px;width:1370px;height:1px;background:#000;"></div><div class="t" style="left:35.65px;top:539px;font-size:12px;color:#000;transform:scaleX(0.9500);">15</div><svg class="a" style="left:133px;top:539px" width="12" height="11" viewBox="0 0 12 11" shape-rendering="crispEdges"><rect x="0" y="0" width="6" height="1" fill="#c4c4c4"/><rect x="6" y="0" width="2" height="1" fill="#ff1c00"/><rect x="8" y="0" width="1" height="1" fill="#000"/><rect x="9" y="0" width="2" height="1" fill="#ff1c00"/><rect x="0" y="1" width="4" height="1" fill="#c4c4c4"/><rect x="4" y="1" width="4" height="1" fill="#ff1c00"/><rect x="8" y="1" width="1" height="1" fill="#000"/><rect x="9" y="1" width="3" height="1" fill="#ff1c00"/><rect x="0" y="2" width="3" height="1" fill="#c4c4c4"/><rect x="3" y="2" width="4" height="1" fill="#ff1c00"/><rect x="7" y="2" width="2" height="1" fill="#000"/><rect x="9" y="2" width="3" height="1" fill="#ff1c00"/><rect x="0" y="3" width="2" height="1" fill="#c4c4c4"/><rect x="2" y="3" width="1" height="1" fill="#ff1c00"/><rect x="3" y="3" width="2" height="1" fill="#ffff00"/><rect x="5" y="3" width="7" height="1" fill="#ff1c00"/><rect x="0" y="4" width="2" height="1" fill="#c4c4c4"/><rect x="2" y="4" width="1" height="1" fill="#ff1c00"/><rect x="3" y="4" width="3" height="1" fill="#ffff00"/><rect x="6" y="4" width="5" height="1" fill="#ff1c00"/><rect x="0" y="5" width="2" height="1" fill="#ff1c00"/><rect x="2" y="5" width="2" height="1" fill="#ffff00"/><rect x="4" y="5" width="1" height="1" fill="#000"/><rect x="5" y="5" width="2" height="1" fill="#ffff00"/><rect x="7" y="5" width="2" height="1" fill="#ff1c00"/><rect x="9" y="5" width="2" height="1" fill="#a8a800"/><rect x="1" y="6" width="4" height="1" fill="#ffff00"/><rect x="5" y="6" width="1" height="1" fill="#000"/><rect x="6" y="6" width="2" height="1" fill="#ffff00"/><rect x="8" y="6" width="3" height="1" fill="#a8a800"/><rect x="1" y="7" width="7" height="1" fill="#ffff00"/><rect x="8" y="7" width="2" height="1" fill="#a8a800"/><rect x="10" y="7" width="1" height="1" fill="#000"/><rect x="1" y="8" width="2" height="1" fill="#ffff00"/><rect x="3" y="8" width="2" height="1" fill="#000"/><rect x="5" y="8" width="3" height="1" fill="#ffff00"/><rect x="8" y="8" width="2" height="1" fill="#a8a800"/><rect x="10" y="8" width="1" height="1" fill="#000"/><rect x="1" y="9" width="2" height="1" fill="#ffff00"/><rect x="3" y="9" width="2" height="1" fill="#000"/><rect x="5" y="9" width="3" height="1" fill="#ffff00"/><rect x="8" y="9" width="3" height="1" fill="#a8a800"/><rect x="1" y="10" width="7" height="1" fill="#ffff00"/><rect x="8" y="10" width="3" height="1" fill="#a8a800"/></svg><div class="a" style="left:151px;top:537px;width:13px;height:16px;background:#c8c8c8;"></div><div class="a" style="left:153px;top:539px;width:10px;height:10px;background:#d8d8d8;"></div><div class="a" style="left:154px;top:540px;width:8px;height:8px;background:#fff;"></div><div class="a" style="left:153px;top:539px;width:10px;height:1px;background:#000;"></div><div class="a" style="left:153px;top:539px;width:1px;height:10px;background:#000;"></div><div class="a" style="left:153px;top:549px;width:10px;height:1px;background:#fff;"></div><div class="t" style="left:193.03px;top:539px;font-size:12px;color:#000;transform:scaleX(0.9661);">31/08/2016</div><div class="t" style="left:256.07px;top:539px;font-size:12px;color:#000;transform:scaleX(0.9322);">681000000</div><div class="t" style="left:366.09px;top:539px;font-size:12px;color:#000;transform:scaleX(0.9143);">249,60</div><div class="t" style="left:784.09px;top:539px;font-size:12px;color:#000;transform:scaleX(0.9143);">249,60</div><div class="t" style="left:935.04px;top:539px;font-size:12px;color:#000;transform:scaleX(0.9600);">1818</div><div class="a" style="left:981px;top:536px;width:195px;height:18px;overflow:hidden"><div class="t" style="left:3.00px;top:3px;font-size:12px;color:#000;transform:scaleX(0.9032);">Amortización 31/08/2016 Elemento 1818</div></div><div class="t" style="left:1298.07px;top:539px;font-size:12px;color:#000;transform:scaleX(0.9322);">282000000</div><div class="a" style="left:9px;top:555px;width:18px;height:18px;background:#b3b3ff;"></div><div class="a" style="left:28px;top:555px;width:1351px;height:18px;background:#ffffff;"></div><div class="a" style="left:9px;top:573px;width:1370px;height:1px;background:#000;"></div><div class="t" style="left:35.65px;top:558px;font-size:12px;color:#000;transform:scaleX(0.9500);">16</div><svg class="a" style="left:133px;top:558px" width="12" height="11" viewBox="0 0 12 11" shape-rendering="crispEdges"><rect x="0" y="0" width="6" height="1" fill="#c4c4c4"/><rect x="6" y="0" width="2" height="1" fill="#ff1c00"/><rect x="8" y="0" width="1" height="1" fill="#000"/><rect x="9" y="0" width="2" height="1" fill="#ff1c00"/><rect x="0" y="1" width="4" height="1" fill="#c4c4c4"/><rect x="4" y="1" width="4" height="1" fill="#ff1c00"/><rect x="8" y="1" width="1" height="1" fill="#000"/><rect x="9" y="1" width="3" height="1" fill="#ff1c00"/><rect x="0" y="2" width="3" height="1" fill="#c4c4c4"/><rect x="3" y="2" width="4" height="1" fill="#ff1c00"/><rect x="7" y="2" width="2" height="1" fill="#000"/><rect x="9" y="2" width="3" height="1" fill="#ff1c00"/><rect x="0" y="3" width="2" height="1" fill="#c4c4c4"/><rect x="2" y="3" width="1" height="1" fill="#ff1c00"/><rect x="3" y="3" width="2" height="1" fill="#ffff00"/><rect x="5" y="3" width="7" height="1" fill="#ff1c00"/><rect x="0" y="4" width="2" height="1" fill="#c4c4c4"/><rect x="2" y="4" width="1" height="1" fill="#ff1c00"/><rect x="3" y="4" width="3" height="1" fill="#ffff00"/><rect x="6" y="4" width="5" height="1" fill="#ff1c00"/><rect x="0" y="5" width="2" height="1" fill="#ff1c00"/><rect x="2" y="5" width="2" height="1" fill="#ffff00"/><rect x="4" y="5" width="1" height="1" fill="#000"/><rect x="5" y="5" width="2" height="1" fill="#ffff00"/><rect x="7" y="5" width="2" height="1" fill="#ff1c00"/><rect x="9" y="5" width="2" height="1" fill="#a8a800"/><rect x="1" y="6" width="4" height="1" fill="#ffff00"/><rect x="5" y="6" width="1" height="1" fill="#000"/><rect x="6" y="6" width="2" height="1" fill="#ffff00"/><rect x="8" y="6" width="3" height="1" fill="#a8a800"/><rect x="1" y="7" width="7" height="1" fill="#ffff00"/><rect x="8" y="7" width="2" height="1" fill="#a8a800"/><rect x="10" y="7" width="1" height="1" fill="#000"/><rect x="1" y="8" width="2" height="1" fill="#ffff00"/><rect x="3" y="8" width="2" height="1" fill="#000"/><rect x="5" y="8" width="3" height="1" fill="#ffff00"/><rect x="8" y="8" width="2" height="1" fill="#a8a800"/><rect x="10" y="8" width="1" height="1" fill="#000"/><rect x="1" y="9" width="2" height="1" fill="#ffff00"/><rect x="3" y="9" width="2" height="1" fill="#000"/><rect x="5" y="9" width="3" height="1" fill="#ffff00"/><rect x="8" y="9" width="3" height="1" fill="#a8a800"/><rect x="1" y="10" width="7" height="1" fill="#ffff00"/><rect x="8" y="10" width="3" height="1" fill="#a8a800"/></svg><div class="a" style="left:151px;top:556px;width:13px;height:16px;background:#c8c8c8;"></div><div class="a" style="left:153px;top:558px;width:10px;height:10px;background:#d8d8d8;"></div><div class="a" style="left:154px;top:559px;width:8px;height:8px;background:#fff;"></div><div class="a" style="left:153px;top:558px;width:10px;height:1px;background:#000;"></div><div class="a" style="left:153px;top:558px;width:1px;height:10px;background:#000;"></div><div class="a" style="left:153px;top:568px;width:10px;height:1px;background:#fff;"></div><div class="t" style="left:193.03px;top:558px;font-size:12px;color:#000;transform:scaleX(0.9661);">31/08/2016</div><div class="t" style="left:256.07px;top:558px;font-size:12px;color:#000;transform:scaleX(0.9322);">282000000</div><div class="t" style="left:442.09px;top:558px;font-size:12px;color:#000;transform:scaleX(0.9143);">249,60</div><div class="t" style="left:858.09px;top:558px;font-size:12px;color:#000;transform:scaleX(0.9143);">249,60</div><div class="t" style="left:935.04px;top:558px;font-size:12px;color:#000;transform:scaleX(0.9600);">1818</div><div class="a" style="left:981px;top:555px;width:195px;height:18px;overflow:hidden"><div class="t" style="left:3.00px;top:3px;font-size:12px;color:#000;transform:scaleX(0.9032);">Amortización 31/08/2016 Elemento 1818</div></div><div class="t" style="left:1298.07px;top:558px;font-size:12px;color:#000;transform:scaleX(0.9322);">681000000</div><div class="a" style="left:9px;top:574px;width:18px;height:18px;background:#b3b3ff;"></div><div class="a" style="left:28px;top:574px;width:1351px;height:18px;background:#ccccff;"></div><div class="a" style="left:9px;top:592px;width:1370px;height:1px;background:#000;"></div><div class="t" style="left:35.65px;top:577px;font-size:12px;color:#000;transform:scaleX(0.9500);">17</div><svg class="a" style="left:133px;top:577px" width="12" height="11" viewBox="0 0 12 11" shape-rendering="crispEdges"><rect x="0" y="0" width="6" height="1" fill="#c4c4c4"/><rect x="6" y="0" width="2" height="1" fill="#ff1c00"/><rect x="8" y="0" width="1" height="1" fill="#000"/><rect x="9" y="0" width="2" height="1" fill="#ff1c00"/><rect x="0" y="1" width="4" height="1" fill="#c4c4c4"/><rect x="4" y="1" width="4" height="1" fill="#ff1c00"/><rect x="8" y="1" width="1" height="1" fill="#000"/><rect x="9" y="1" width="3" height="1" fill="#ff1c00"/><rect x="0" y="2" width="3" height="1" fill="#c4c4c4"/><rect x="3" y="2" width="4" height="1" fill="#ff1c00"/><rect x="7" y="2" width="2" height="1" fill="#000"/><rect x="9" y="2" width="3" height="1" fill="#ff1c00"/><rect x="0" y="3" width="2" height="1" fill="#c4c4c4"/><rect x="2" y="3" width="1" height="1" fill="#ff1c00"/><rect x="3" y="3" width="2" height="1" fill="#ffff00"/><rect x="5" y="3" width="7" height="1" fill="#ff1c00"/><rect x="0" y="4" width="2" height="1" fill="#c4c4c4"/><rect x="2" y="4" width="1" height="1" fill="#ff1c00"/><rect x="3" y="4" width="3" height="1" fill="#ffff00"/><rect x="6" y="4" width="5" height="1" fill="#ff1c00"/><rect x="0" y="5" width="2" height="1" fill="#ff1c00"/><rect x="2" y="5" width="2" height="1" fill="#ffff00"/><rect x="4" y="5" width="1" height="1" fill="#000"/><rect x="5" y="5" width="2" height="1" fill="#ffff00"/><rect x="7" y="5" width="2" height="1" fill="#ff1c00"/><rect x="9" y="5" width="2" height="1" fill="#a8a800"/><rect x="1" y="6" width="4" height="1" fill="#ffff00"/><rect x="5" y="6" width="1" height="1" fill="#000"/><rect x="6" y="6" width="2" height="1" fill="#ffff00"/><rect x="8" y="6" width="3" height="1" fill="#a8a800"/><rect x="1" y="7" width="7" height="1" fill="#ffff00"/><rect x="8" y="7" width="2" height="1" fill="#a8a800"/><rect x="10" y="7" width="1" height="1" fill="#000"/><rect x="1" y="8" width="2" height="1" fill="#ffff00"/><rect x="3" y="8" width="2" height="1" fill="#000"/><rect x="5" y="8" width="3" height="1" fill="#ffff00"/><rect x="8" y="8" width="2" height="1" fill="#a8a800"/><rect x="10" y="8" width="1" height="1" fill="#000"/><rect x="1" y="9" width="2" height="1" fill="#ffff00"/><rect x="3" y="9" width="2" height="1" fill="#000"/><rect x="5" y="9" width="3" height="1" fill="#ffff00"/><rect x="8" y="9" width="3" height="1" fill="#a8a800"/><rect x="1" y="10" width="7" height="1" fill="#ffff00"/><rect x="8" y="10" width="3" height="1" fill="#a8a800"/></svg><div class="a" style="left:151px;top:575px;width:13px;height:16px;background:#c8c8c8;"></div><div class="a" style="left:153px;top:577px;width:10px;height:10px;background:#d8d8d8;"></div><div class="a" style="left:154px;top:578px;width:8px;height:8px;background:#fff;"></div><div class="a" style="left:153px;top:577px;width:10px;height:1px;background:#000;"></div><div class="a" style="left:153px;top:577px;width:1px;height:10px;background:#000;"></div><div class="a" style="left:153px;top:587px;width:10px;height:1px;background:#fff;"></div><div class="t" style="left:193.03px;top:577px;font-size:12px;color:#000;transform:scaleX(0.9661);">30/09/2016</div><div class="t" style="left:256.07px;top:577px;font-size:12px;color:#000;transform:scaleX(0.9322);">681000000</div><div class="t" style="left:366.09px;top:577px;font-size:12px;color:#000;transform:scaleX(0.9143);">249,60</div><div class="t" style="left:784.09px;top:577px;font-size:12px;color:#000;transform:scaleX(0.9143);">249,60</div><div class="t" style="left:935.04px;top:577px;font-size:12px;color:#000;transform:scaleX(0.9600);">1818</div><div class="a" style="left:981px;top:574px;width:195px;height:18px;overflow:hidden"><div class="t" style="left:3.00px;top:3px;font-size:12px;color:#000;transform:scaleX(0.9032);">Amortización 30/09/2016 Elemento 1818</div></div><div class="t" style="left:1298.07px;top:577px;font-size:12px;color:#000;transform:scaleX(0.9322);">282000000</div><div class="a" style="left:9px;top:593px;width:18px;height:18px;background:#b3b3ff;"></div><div class="a" style="left:28px;top:593px;width:1351px;height:18px;background:#ffffff;"></div><div class="a" style="left:9px;top:611px;width:1370px;height:1px;background:#000;"></div><div class="t" style="left:35.65px;top:596px;font-size:12px;color:#000;transform:scaleX(0.9500);">18</div><svg class="a" style="left:133px;top:596px" width="12" height="11" viewBox="0 0 12 11" shape-rendering="crispEdges"><rect x="0" y="0" width="6" height="1" fill="#c4c4c4"/><rect x="6" y="0" width="2" height="1" fill="#ff1c00"/><rect x="8" y="0" width="1" height="1" fill="#000"/><rect x="9" y="0" width="2" height="1" fill="#ff1c00"/><rect x="0" y="1" width="4" height="1" fill="#c4c4c4"/><rect x="4" y="1" width="4" height="1" fill="#ff1c00"/><rect x="8" y="1" width="1" height="1" fill="#000"/><rect x="9" y="1" width="3" height="1" fill="#ff1c00"/><rect x="0" y="2" width="3" height="1" fill="#c4c4c4"/><rect x="3" y="2" width="4" height="1" fill="#ff1c00"/><rect x="7" y="2" width="2" height="1" fill="#000"/><rect x="9" y="2" width="3" height="1" fill="#ff1c00"/><rect x="0" y="3" width="2" height="1" fill="#c4c4c4"/><rect x="2" y="3" width="1" height="1" fill="#ff1c00"/><rect x="3" y="3" width="2" height="1" fill="#ffff00"/><rect x="5" y="3" width="7" height="1" fill="#ff1c00"/><rect x="0" y="4" width="2" height="1" fill="#c4c4c4"/><rect x="2" y="4" width="1" height="1" fill="#ff1c00"/><rect x="3" y="4" width="3" height="1" fill="#ffff00"/><rect x="6" y="4" width="5" height="1" fill="#ff1c00"/><rect x="0" y="5" width="2" height="1" fill="#ff1c00"/><rect x="2" y="5" width="2" height="1" fill="#ffff00"/><rect x="4" y="5" width="1" height="1" fill="#000"/><rect x="5" y="5" width="2" height="1" fill="#ffff00"/><rect x="7" y="5" width="2" height="1" fill="#ff1c00"/><rect x="9" y="5" width="2" height="1" fill="#a8a800"/><rect x="1" y="6" width="4" height="1" fill="#ffff00"/><rect x="5" y="6" width="1" height="1" fill="#000"/><rect x="6" y="6" width="2" height="1" fill="#ffff00"/><rect x="8" y="6" width="3" height="1" fill="#a8a800"/><rect x="1" y="7" width="7" height="1" fill="#ffff00"/><rect x="8" y="7" width="2" height="1" fill="#a8a800"/><rect x="10" y="7" width="1" height="1" fill="#000"/><rect x="1" y="8" width="2" height="1" fill="#ffff00"/><rect x="3" y="8" width="2" height="1" fill="#000"/><rect x="5" y="8" width="3" height="1" fill="#ffff00"/><rect x="8" y="8" width="2" height="1" fill="#a8a800"/><rect x="10" y="8" width="1" height="1" fill="#000"/><rect x="1" y="9" width="2" height="1" fill="#ffff00"/><rect x="3" y="9" width="2" height="1" fill="#000"/><rect x="5" y="9" width="3" height="1" fill="#ffff00"/><rect x="8" y="9" width="3" height="1" fill="#a8a800"/><rect x="1" y="10" width="7" height="1" fill="#ffff00"/><rect x="8" y="10" width="3" height="1" fill="#a8a800"/></svg><div class="a" style="left:151px;top:594px;width:13px;height:16px;background:#c8c8c8;"></div><div class="a" style="left:153px;top:596px;width:10px;height:10px;background:#d8d8d8;"></div><div class="a" style="left:154px;top:597px;width:8px;height:8px;background:#fff;"></div><div class="a" style="left:153px;top:596px;width:10px;height:1px;background:#000;"></div><div class="a" style="left:153px;top:596px;width:1px;height:10px;background:#000;"></div><div class="a" style="left:153px;top:606px;width:10px;height:1px;background:#fff;"></div><div class="t" style="left:193.03px;top:596px;font-size:12px;color:#000;transform:scaleX(0.9661);">30/09/2016</div><div class="t" style="left:256.07px;top:596px;font-size:12px;color:#000;transform:scaleX(0.9322);">282000000</div><div class="t" style="left:442.09px;top:596px;font-size:12px;color:#000;transform:scaleX(0.9143);">249,60</div><div class="t" style="left:858.09px;top:596px;font-size:12px;color:#000;transform:scaleX(0.9143);">249,60</div><div class="t" style="left:935.04px;top:596px;font-size:12px;color:#000;transform:scaleX(0.9600);">1818</div><div class="a" style="left:981px;top:593px;width:195px;height:18px;overflow:hidden"><div class="t" style="left:3.00px;top:3px;font-size:12px;color:#000;transform:scaleX(0.9032);">Amortización 30/09/2016 Elemento 1818</div></div><div class="t" style="left:1298.07px;top:596px;font-size:12px;color:#000;transform:scaleX(0.9322);">681000000</div><div class="a" style="left:9px;top:612px;width:18px;height:18px;background:#b3b3ff;"></div><div class="a" style="left:28px;top:612px;width:1351px;height:18px;background:#ccccff;"></div><div class="a" style="left:9px;top:630px;width:1370px;height:1px;background:#000;"></div><div class="t" style="left:35.65px;top:615px;font-size:12px;color:#000;transform:scaleX(0.9500);">19</div><svg class="a" style="left:133px;top:615px" width="12" height="11" viewBox="0 0 12 11" shape-rendering="crispEdges"><rect x="0" y="0" width="6" height="1" fill="#c4c4c4"/><rect x="6" y="0" width="2" height="1" fill="#ff1c00"/><rect x="8" y="0" width="1" height="1" fill="#000"/><rect x="9" y="0" width="2" height="1" fill="#ff1c00"/><rect x="0" y="1" width="4" height="1" fill="#c4c4c4"/><rect x="4" y="1" width="4" height="1" fill="#ff1c00"/><rect x="8" y="1" width="1" height="1" fill="#000"/><rect x="9" y="1" width="3" height="1" fill="#ff1c00"/><rect x="0" y="2" width="3" height="1" fill="#c4c4c4"/><rect x="3" y="2" width="4" height="1" fill="#ff1c00"/><rect x="7" y="2" width="2" height="1" fill="#000"/><rect x="9" y="2" width="3" height="1" fill="#ff1c00"/><rect x="0" y="3" width="2" height="1" fill="#c4c4c4"/><rect x="2" y="3" width="1" height="1" fill="#ff1c00"/><rect x="3" y="3" width="2" height="1" fill="#ffff00"/><rect x="5" y="3" width="7" height="1" fill="#ff1c00"/><rect x="0" y="4" width="2" height="1" fill="#c4c4c4"/><rect x="2" y="4" width="1" height="1" fill="#ff1c00"/><rect x="3" y="4" width="3" height="1" fill="#ffff00"/><rect x="6" y="4" width="5" height="1" fill="#ff1c00"/><rect x="0" y="5" width="2" height="1" fill="#ff1c00"/><rect x="2" y="5" width="2" height="1" fill="#ffff00"/><rect x="4" y="5" width="1" height="1" fill="#000"/><rect x="5" y="5" width="2" height="1" fill="#ffff00"/><rect x="7" y="5" width="2" height="1" fill="#ff1c00"/><rect x="9" y="5" width="2" height="1" fill="#a8a800"/><rect x="1" y="6" width="4" height="1" fill="#ffff00"/><rect x="5" y="6" width="1" height="1" fill="#000"/><rect x="6" y="6" width="2" height="1" fill="#ffff00"/><rect x="8" y="6" width="3" height="1" fill="#a8a800"/><rect x="1" y="7" width="7" height="1" fill="#ffff00"/><rect x="8" y="7" width="2" height="1" fill="#a8a800"/><rect x="10" y="7" width="1" height="1" fill="#000"/><rect x="1" y="8" width="2" height="1" fill="#ffff00"/><rect x="3" y="8" width="2" height="1" fill="#000"/><rect x="5" y="8" width="3" height="1" fill="#ffff00"/><rect x="8" y="8" width="2" height="1" fill="#a8a800"/><rect x="10" y="8" width="1" height="1" fill="#000"/><rect x="1" y="9" width="2" height="1" fill="#ffff00"/><rect x="3" y="9" width="2" height="1" fill="#000"/><rect x="5" y="9" width="3" height="1" fill="#ffff00"/><rect x="8" y="9" width="3" height="1" fill="#a8a800"/><rect x="1" y="10" width="7" height="1" fill="#ffff00"/><rect x="8" y="10" width="3" height="1" fill="#a8a800"/></svg><div class="a" style="left:151px;top:613px;width:13px;height:16px;background:#c8c8c8;"></div><div class="a" style="left:153px;top:615px;width:10px;height:10px;background:#d8d8d8;"></div><div class="a" style="left:154px;top:616px;width:8px;height:8px;background:#fff;"></div><div class="a" style="left:153px;top:615px;width:10px;height:1px;background:#000;"></div><div class="a" style="left:153px;top:615px;width:1px;height:10px;background:#000;"></div><div class="a" style="left:153px;top:625px;width:10px;height:1px;background:#fff;"></div><div class="t" style="left:193.03px;top:615px;font-size:12px;color:#000;transform:scaleX(0.9661);">31/10/2016</div><div class="t" style="left:256.07px;top:615px;font-size:12px;color:#000;transform:scaleX(0.9322);">681000000</div><div class="t" style="left:366.09px;top:615px;font-size:12px;color:#000;transform:scaleX(0.9143);">249,60</div><div class="t" style="left:784.09px;top:615px;font-size:12px;color:#000;transform:scaleX(0.9143);">249,60</div><div class="t" style="left:935.04px;top:615px;font-size:12px;color:#000;transform:scaleX(0.9600);">1818</div><div class="a" style="left:981px;top:612px;width:195px;height:18px;overflow:hidden"><div class="t" style="left:3.00px;top:3px;font-size:12px;color:#000;transform:scaleX(0.9032);">Amortización 31/10/2016 Elemento 1818</div></div><div class="t" style="left:1298.07px;top:615px;font-size:12px;color:#000;transform:scaleX(0.9322);">282000000</div><div class="a" style="left:9px;top:631px;width:18px;height:18px;background:#b3b3ff;"></div><div class="a" style="left:28px;top:631px;width:1351px;height:18px;background:#000;"></div><div class="a" style="left:9px;top:649px;width:1370px;height:1px;background:#000;"></div><div class="a" style="left:28px;top:631px;width:22px;height:1px;background:#fff;"></div><div class="a" style="left:28px;top:631px;width:1px;height:18px;background:#fff;"></div><div class="t" style="left:35.00px;top:634px;font-size:12px;color:#fff;font-weight:bold;">20</div><svg class="a" style="left:9px;top:631px" width="18" height="18" viewBox="0 0 18 18" shape-rendering="crispEdges"><path d="M7 4 L13 9.5 L7 15 Z" fill="#000"/></svg><svg class="a" style="left:133px;top:634px" width="12" height="11" viewBox="0 0 12 11" shape-rendering="crispEdges"><rect x="0" y="0" width="6" height="1" fill="#c4c4c4"/><rect x="6" y="0" width="2" height="1" fill="#ff1c00"/><rect x="8" y="0" width="1" height="1" fill="#000"/><rect x="9" y="0" width="2" height="1" fill="#ff1c00"/><rect x="0" y="1" width="4" height="1" fill="#c4c4c4"/><rect x="4" y="1" width="4" height="1" fill="#ff1c00"/><rect x="8" y="1" width="1" height="1" fill="#000"/><rect x="9" y="1" width="3" height="1" fill="#ff1c00"/><rect x="0" y="2" width="3" height="1" fill="#c4c4c4"/><rect x="3" y="2" width="4" height="1" fill="#ff1c00"/><rect x="7" y="2" width="2" height="1" fill="#000"/><rect x="9" y="2" width="3" height="1" fill="#ff1c00"/><rect x="0" y="3" width="2" height="1" fill="#c4c4c4"/><rect x="2" y="3" width="1" height="1" fill="#ff1c00"/><rect x="3" y="3" width="2" height="1" fill="#ffff00"/><rect x="5" y="3" width="7" height="1" fill="#ff1c00"/><rect x="0" y="4" width="2" height="1" fill="#c4c4c4"/><rect x="2" y="4" width="1" height="1" fill="#ff1c00"/><rect x="3" y="4" width="3" height="1" fill="#ffff00"/><rect x="6" y="4" width="5" height="1" fill="#ff1c00"/><rect x="0" y="5" width="2" height="1" fill="#ff1c00"/><rect x="2" y="5" width="2" height="1" fill="#ffff00"/><rect x="4" y="5" width="1" height="1" fill="#000"/><rect x="5" y="5" width="2" height="1" fill="#ffff00"/><rect x="7" y="5" width="2" height="1" fill="#ff1c00"/><rect x="9" y="5" width="2" height="1" fill="#a8a800"/><rect x="1" y="6" width="4" height="1" fill="#ffff00"/><rect x="5" y="6" width="1" height="1" fill="#000"/><rect x="6" y="6" width="2" height="1" fill="#ffff00"/><rect x="8" y="6" width="3" height="1" fill="#a8a800"/><rect x="1" y="7" width="7" height="1" fill="#ffff00"/><rect x="8" y="7" width="2" height="1" fill="#a8a800"/><rect x="10" y="7" width="1" height="1" fill="#000"/><rect x="1" y="8" width="2" height="1" fill="#ffff00"/><rect x="3" y="8" width="2" height="1" fill="#000"/><rect x="5" y="8" width="3" height="1" fill="#ffff00"/><rect x="8" y="8" width="2" height="1" fill="#a8a800"/><rect x="10" y="8" width="1" height="1" fill="#000"/><rect x="1" y="9" width="2" height="1" fill="#ffff00"/><rect x="3" y="9" width="2" height="1" fill="#000"/><rect x="5" y="9" width="3" height="1" fill="#ffff00"/><rect x="8" y="9" width="3" height="1" fill="#a8a800"/><rect x="1" y="10" width="7" height="1" fill="#ffff00"/><rect x="8" y="10" width="3" height="1" fill="#a8a800"/></svg><div class="a" style="left:151px;top:632px;width:13px;height:16px;background:#c8c8c8;"></div><div class="a" style="left:153px;top:634px;width:10px;height:10px;background:#d8d8d8;"></div><div class="a" style="left:154px;top:635px;width:8px;height:8px;background:#fff;"></div><div class="a" style="left:153px;top:634px;width:10px;height:1px;background:#000;"></div><div class="a" style="left:153px;top:634px;width:1px;height:10px;background:#000;"></div><div class="a" style="left:153px;top:644px;width:10px;height:1px;background:#fff;"></div><div class="t" style="left:193.03px;top:634px;font-size:12px;color:#fff;transform:scaleX(0.9661);">31/10/2016</div><div class="t" style="left:256.07px;top:634px;font-size:12px;color:#fff;transform:scaleX(0.9322);">282000000</div><div class="t" style="left:442.09px;top:634px;font-size:12px;color:#fff;transform:scaleX(0.9143);">249,60</div><div class="t" style="left:858.09px;top:634px;font-size:12px;color:#fff;transform:scaleX(0.9143);">249,60</div><div class="t" style="left:935.04px;top:634px;font-size:12px;color:#fff;transform:scaleX(0.9600);">1818</div><div class="a" style="left:981px;top:631px;width:195px;height:18px;overflow:hidden"><div class="t" style="left:3.00px;top:3px;font-size:12px;color:#fff;transform:scaleX(0.9032);">Amortización 31/10/2016 Elemento 1818</div></div><div class="t" style="left:1298.07px;top:634px;font-size:12px;color:#fff;transform:scaleX(0.9322);">681000000</div><div class="a" style="left:27px;top:255px;width:1px;height:395px;background:#000;"></div><div class="a" style="left:51px;top:255px;width:1px;height:395px;background:#808080;"></div><div class="a" style="left:50px;top:255px;width:1px;height:395px;background:#fff;"></div><div class="a" style="left:73px;top:255px;width:1px;height:395px;background:#808080;"></div><div class="a" style="left:92px;top:255px;width:1px;height:395px;background:#808080;"></div><div class="a" style="left:112px;top:255px;width:1px;height:395px;background:#808080;"></div><div class="a" style="left:111px;top:255px;width:1px;height:395px;background:#fff;"></div><div class="a" style="left:130px;top:255px;width:1px;height:395px;background:#808080;"></div><div class="a" style="left:148px;top:255px;width:1px;height:395px;background:#808080;"></div><div class="a" style="left:165px;top:255px;width:1px;height:395px;background:#808080;"></div><div class="a" style="left:164px;top:255px;width:1px;height:395px;background:#fff;"></div><div class="a" style="left:187px;top:255px;width:1px;height:395px;background:#808080;"></div><div class="a" style="left:186px;top:255px;width:1px;height:395px;background:#fff;"></div><div class="a" style="left:254px;top:255px;width:1px;height:395px;background:#808080;"></div><div class="a" style="left:253px;top:255px;width:1px;height:395px;background:#fff;"></div><div class="a" style="left:327px;top:255px;width:1px;height:395px;background:#808080;"></div><div class="a" style="left:326px;top:255px;width:1px;height:395px;background:#fff;"></div><div class="a" style="left:402px;top:255px;width:1px;height:395px;background:#808080;"></div><div class="a" style="left:401px;top:255px;width:1px;height:395px;background:#fff;"></div><div class="a" style="left:478px;top:255px;width:1px;height:395px;background:#808080;"></div><div class="a" style="left:477px;top:255px;width:1px;height:395px;background:#fff;"></div><div class="a" style="left:521px;top:255px;width:1px;height:395px;background:#808080;"></div><div class="a" style="left:596px;top:255px;width:1px;height:395px;background:#808080;"></div><div class="a" style="left:671px;top:255px;width:1px;height:395px;background:#808080;"></div><div class="a" style="left:746px;top:255px;width:1px;height:395px;background:#808080;"></div><div class="a" style="left:820px;top:255px;width:1px;height:395px;background:#808080;"></div><div class="a" style="left:819px;top:255px;width:1px;height:395px;background:#fff;"></div><div class="a" style="left:894px;top:255px;width:1px;height:395px;background:#808080;"></div><div class="a" style="left:893px;top:255px;width:1px;height:395px;background:#fff;"></div><div class="a" style="left:932px;top:255px;width:1px;height:395px;background:#808080;"></div><div class="a" style="left:931px;top:255px;width:1px;height:395px;background:#fff;"></div><div class="a" style="left:981px;top:255px;width:1px;height:395px;background:#808080;"></div><div class="a" style="left:980px;top:255px;width:1px;height:395px;background:#fff;"></div><div class="a" style="left:1178px;top:255px;width:1px;height:395px;background:#808080;"></div><div class="a" style="left:1177px;top:255px;width:1px;height:395px;background:#fff;"></div><div class="a" style="left:1229px;top:255px;width:1px;height:395px;background:#808080;"></div><div class="a" style="left:1296px;top:255px;width:1px;height:395px;background:#808080;"></div><div class="a" style="left:1295px;top:255px;width:1px;height:395px;background:#fff;"></div><div class="a" style="left:1368px;top:255px;width:1px;height:395px;background:#808080;"></div><div class="a" style="left:1367px;top:255px;width:1px;height:395px;background:#fff;"></div><div class="t" style="left:76.29px;top:256px;font-size:12px;color:#000;transform:scaleX(0.7143);">E</div><div class="t" style="left:95.00px;top:256px;font-size:12px;color:#000;">N</div><div class="t" style="left:115.00px;top:256px;font-size:12px;color:#000;">D.</div><div class="t" style="left:133.00px;top:256px;font-size:12px;color:#000;">I.</div><div class="t" style="left:168.00px;top:256px;font-size:12px;color:#000;">IV</div><div class="t" style="left:190.06px;top:256px;font-size:12px;color:#000;transform:scaleX(0.9375);">Fecha</div><div class="t" style="left:257.13px;top:256px;font-size:12px;color:#000;transform:scaleX(0.8684);">Cuenta</div><div class="t" style="left:330.08px;top:256px;font-size:12px;color:#000;transform:scaleX(0.9167);">Debe* EUR</div><div class="t" style="left:405.09px;top:256px;font-size:12px;color:#000;transform:scaleX(0.9062);">Haber* EUR</div><div class="t" style="left:481.09px;top:256px;font-size:12px;color:#000;transform:scaleX(0.9062);">Divisa</div><div class="t" style="left:524.11px;top:256px;font-size:12px;color:#000;transform:scaleX(0.8864);">D.Divisa</div><div class="t" style="left:599.11px;top:256px;font-size:12px;color:#000;transform:scaleX(0.8864);">H.Divisa</div><div class="t" style="left:674.15px;top:256px;font-size:12px;color:#000;transform:scaleX(0.8500);">Cambio</div><div class="t" style="left:749.08px;top:256px;font-size:12px;color:#000;transform:scaleX(0.9167);">Debe* EUR</div><div class="t" style="left:823.09px;top:256px;font-size:12px;color:#000;transform:scaleX(0.9062);">Haber* EUR</div><div class="t" style="left:897.07px;top:256px;font-size:12px;color:#000;transform:scaleX(0.9310);">Clave</div><div class="t" style="left:935.10px;top:256px;font-size:12px;color:#000;transform:scaleX(0.9000);">Factura</div><div class="t" style="left:984.15px;top:256px;font-size:12px;color:#000;transform:scaleX(0.8525);">Comentario</div><div class="t" style="left:1181.11px;top:256px;font-size:12px;color:#000;transform:scaleX(0.8857);">Centro</div><div class="t" style="left:1231.00px;top:256px;font-size:12px;color:#000;transform:scaleX(0.9500);">Vto.</div><div class="t" style="left:1299.12px;top:256px;font-size:12px;color:#000;transform:scaleX(0.8750);">Contrapartida</div><div class="t" style="left:1371.07px;top:256px;font-size:12px;color:#000;transform:scaleX(0.9300);">R</div></body></html>
